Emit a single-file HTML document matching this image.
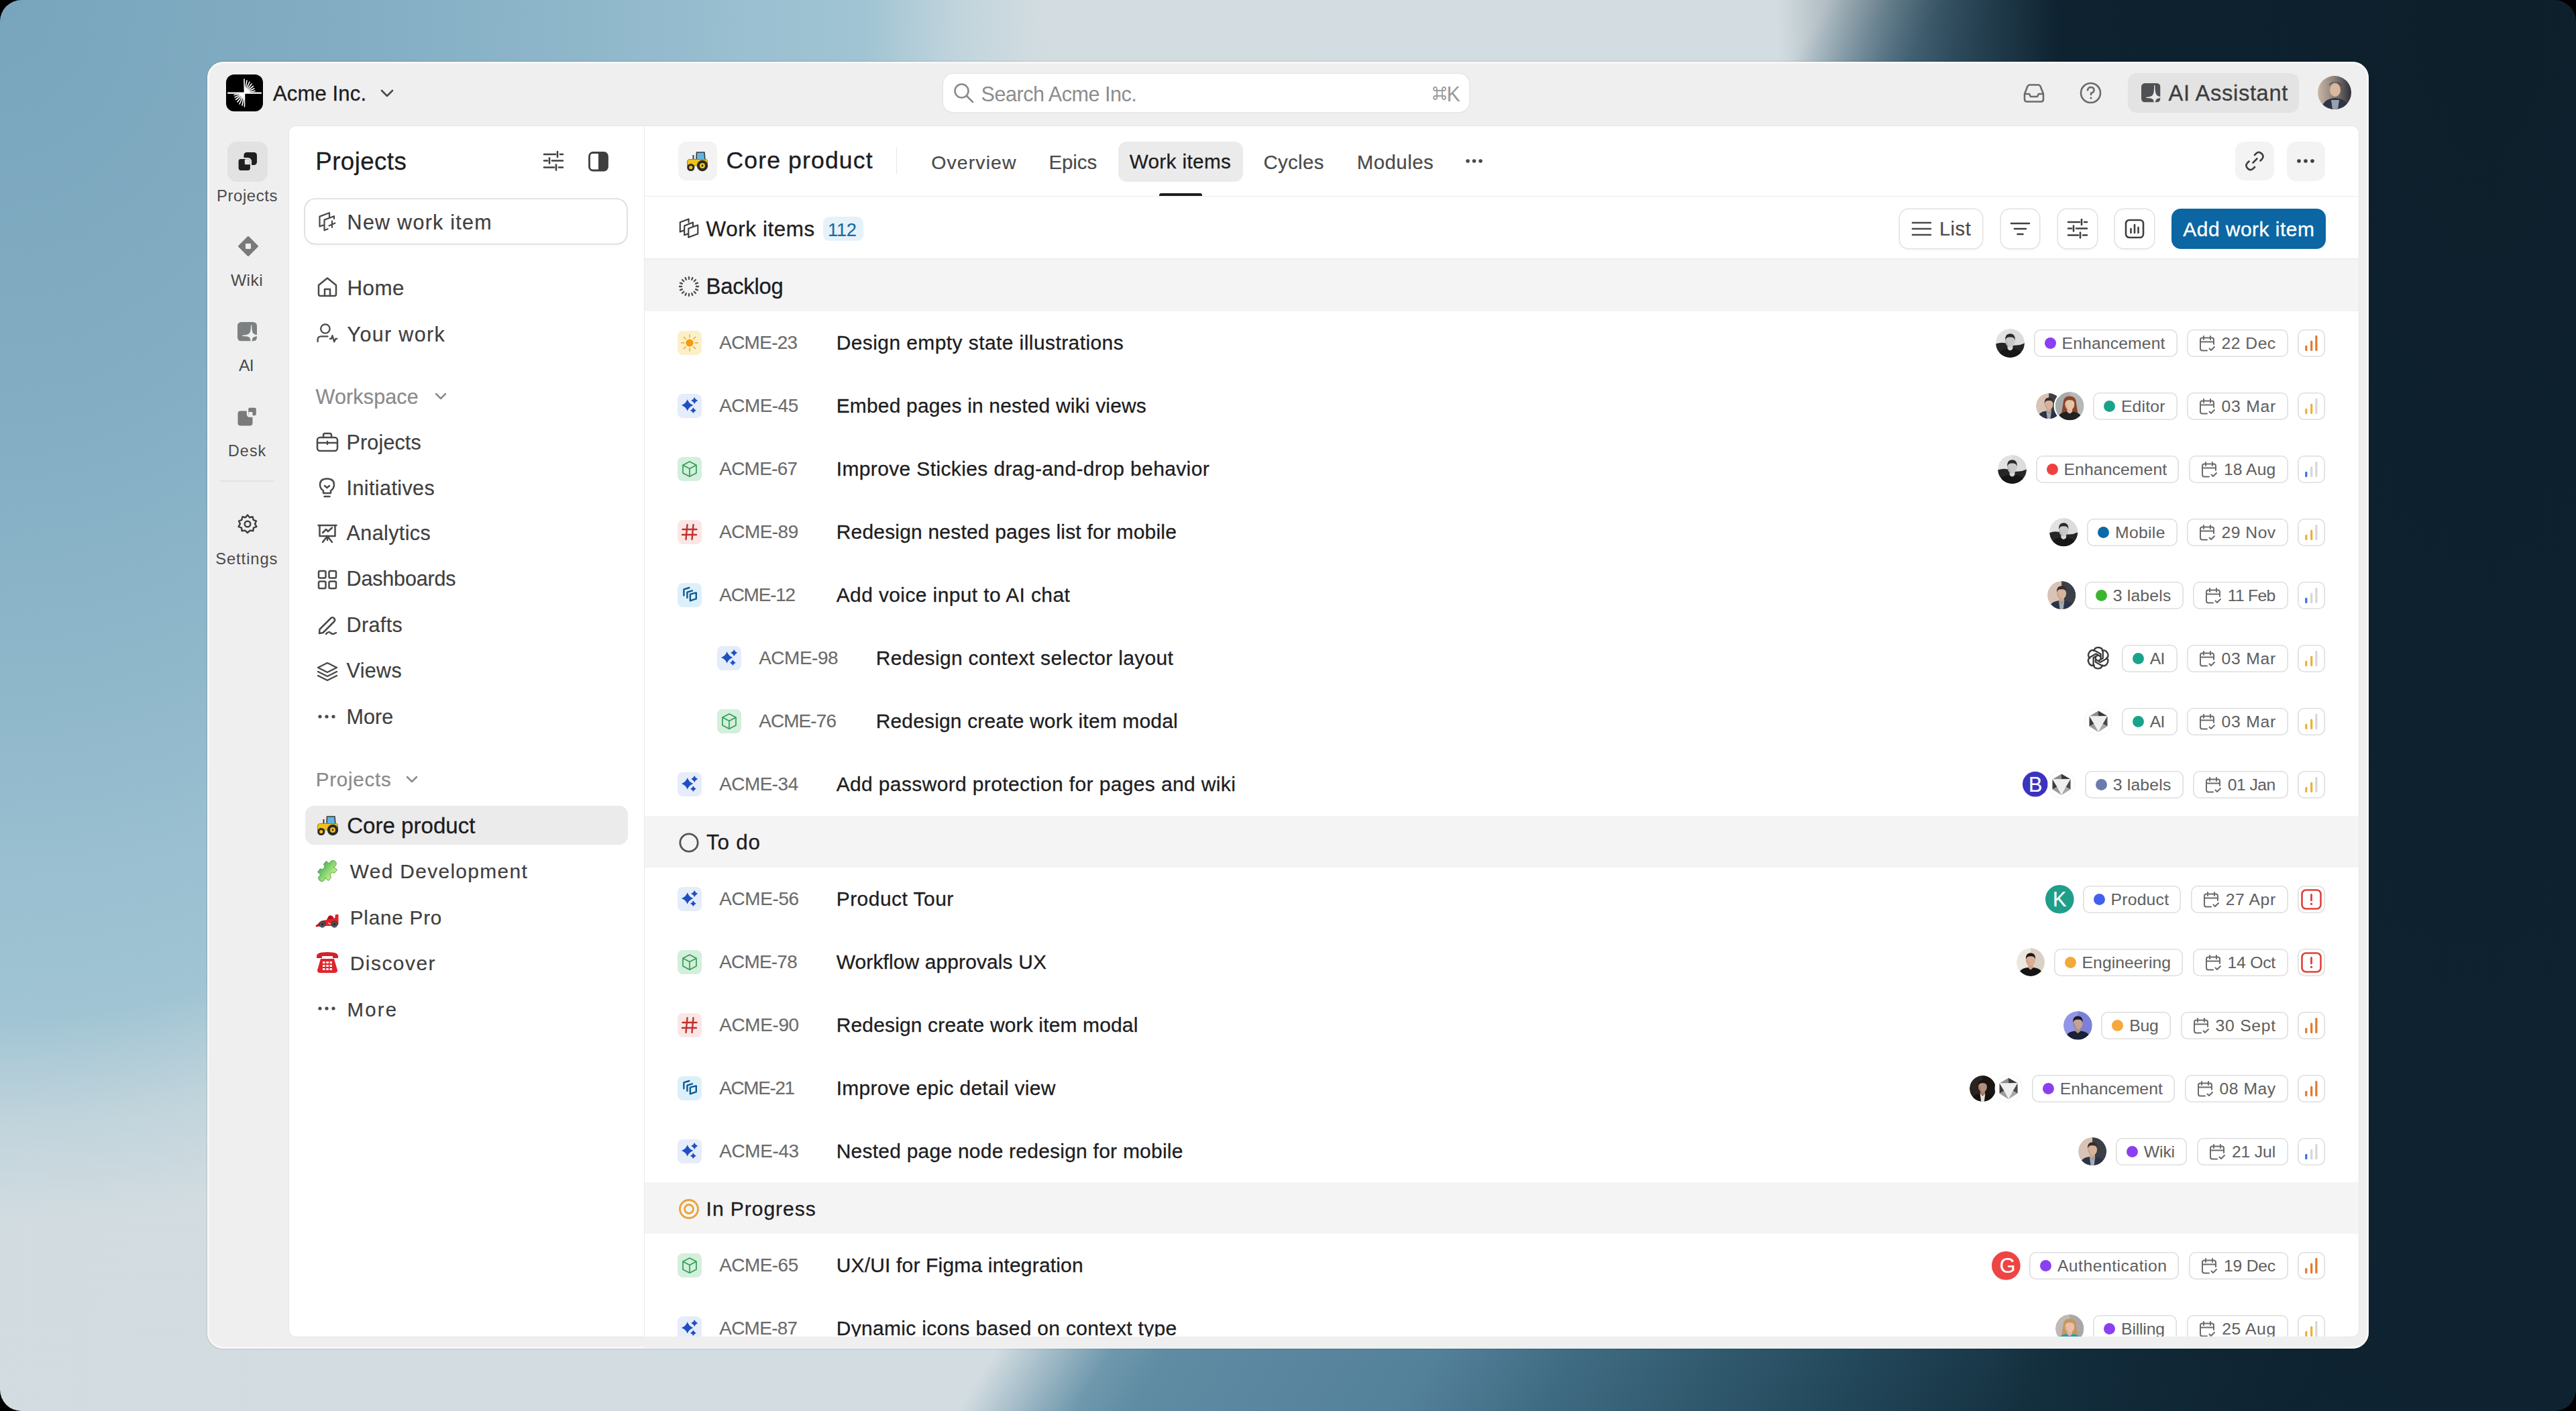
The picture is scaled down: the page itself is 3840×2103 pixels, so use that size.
<!DOCTYPE html>
<html><head><meta charset="utf-8"><title>Work items</title>
<style>
html,body{margin:0;padding:0;width:3840px;height:2103px;overflow:hidden;background:#000;}
body{font-family:"Liberation Sans",sans-serif;position:relative;}
.t{position:absolute;white-space:nowrap;line-height:1;font-family:"Liberation Sans",sans-serif;}
svg{overflow:visible}
</style></head><body>
<div style="position:absolute;left:0;top:0;width:3840px;height:2103px;border-radius:32px;overflow:hidden;
background:
 radial-gradient(ellipse 1050px 2900px at 3700px -50px, #0d1f2b 0%, #0e2230 60%, rgba(14,34,48,0) 100%),
 radial-gradient(ellipse 1500px 1760px at 0px 0px, #79a5bc 0%, #82adc3 35%, #90b8cb 60%, #9ac0d1 75%, #a0c4d3 86%, rgba(185,208,218,0.7) 95%, rgba(210,220,224,0) 104%),
 linear-gradient(121.7deg, #d2dce0 0px, #d3dde1 2320px, #6f98ad 2468px, #5f8ca3 2540px, #54819a 2880px, #3f6b82 3060px, #24495c 3410px, #14303f 3670px, #0f2533 4020px, #0e2230 4400px);"></div>
<div style="position:absolute;left:309.0px;top:92.0px;width:3222.0px;height:1918.0px;background:#efefef;border-radius:24px;box-shadow:inset 0 0 0 2.5px rgba(255,255,255,0.6), 0 0 2px 1px rgba(20,40,50,0.12);"></div><div style="position:absolute;left:431.0px;top:188.0px;width:3085.0px;height:1804.0px;background:#ffffff;border-radius:10px;box-shadow:0 0 0 1px rgba(0,0,0,0.03);"></div><svg style="position:absolute;left:337.0px;top:111.0px;" width="55.0" height="55.0" viewBox="0 0 55 55" fill="none"><rect width="55" height="55" rx="12" fill="#000"/>
<g stroke="#fff" stroke-linecap="round">
<line x1="3" y1="27.7" x2="52" y2="27.7" stroke-width="2.2"/>
<path d="M27 7 L27.5 27.7 M27.5 27.7 L31 9 M27.5 27.7 L35 11 M27.5 27.7 L38 14 M27.5 27.7 L40.5 17.5 M27.5 27.7 L42 21 M27.5 27.7 L43 24.5" stroke-width="1.6"/>
<path d="M27.5 48 L27.5 27.7 M27.5 27.7 L24 46 M27.5 27.7 L20 44 M27.5 27.7 L17 41 M27.5 27.7 L14.5 37.5 M27.5 27.7 L13 34 M27.5 27.7 L12 30.5" stroke-width="1.6"/>
</g></svg><svg style="position:absolute;left:566.0px;top:131.0px;" width="22.0" height="16.0" viewBox="0 0 22 16" fill="none"><path d="M3 4 L11 12 L19 4" stroke="#4a4a4a" stroke-width="2.6" stroke-linecap="round" stroke-linejoin="round"/></svg><div style="position:absolute;left:1406.0px;top:110.0px;width:784.0px;height:57.0px;background:#fff;border-radius:15px;box-shadow:0 0 0 1.5px #e6e6e6;"></div><svg style="position:absolute;left:1421.0px;top:123.0px;" width="32.0" height="32.0" viewBox="0 0 32 32" fill="none"><circle cx="12.5" cy="12.5" r="10" stroke="#8a8a8a" stroke-width="2.6"/><path d="M20 20 L29 29" stroke="#8a8a8a" stroke-width="2.6" stroke-linecap="round"/></svg><svg style="position:absolute;left:2135.0px;top:128.0px;" width="22.0" height="22.0" viewBox="0 0 22 22" fill="none"><path d="M7 7 H15 V15 H7 Z M7 7 V4.5 A2.5 2.5 0 1 0 4.5 7 H7 M15 7 H17.5 A2.5 2.5 0 1 0 15 4.5 V7 M15 15 V17.5 A2.5 2.5 0 1 0 17.5 15 H15 M7 15 H4.5 A2.5 2.5 0 1 0 7 17.5 V15" stroke="#9a9a9a" stroke-width="1.8"/></svg><svg style="position:absolute;left:3014.0px;top:123.0px;" width="36.0" height="32.0" viewBox="0 0 36 32" fill="none"><path d="M4 17 L8.5 5.5 Q9.5 3.5 11.5 3.5 H24.5 Q26.5 3.5 27.5 5.5 L32 17 V25 Q32 28.5 28.5 28.5 H7.5 Q4 28.5 4 25 Z" stroke="#6b6b6b" stroke-width="2.6" stroke-linejoin="round"/><path d="M4 17 H11 L13 21 H23 L25 17 H32" stroke="#6b6b6b" stroke-width="2.6" stroke-linejoin="round"/></svg><svg style="position:absolute;left:3099.0px;top:121.0px;" width="36.0" height="36.0" viewBox="0 0 36 36" fill="none"><circle cx="17.5" cy="17.5" r="14.5" stroke="#6b6b6b" stroke-width="2.6"/><path d="M13 13.5 Q13.5 9 18 9 Q22.5 9.2 22.5 13.5 Q22.5 16.5 18 18 V20" stroke="#6b6b6b" stroke-width="2.6" stroke-linecap="round"/><circle cx="18" cy="25" r="1.6" fill="#6b6b6b"/></svg><div style="position:absolute;left:3172.0px;top:109.0px;width:255.0px;height:59.0px;background:#e3e3e3;border-radius:13px;"></div><svg style="position:absolute;left:3192.0px;top:124.0px;" width="29.0" height="29.0" viewBox="0 0 29 29" fill="none"><defs><clipPath id="aicl1"><rect x="0" y="0" width="28.5" height="28.5" rx="5.5"/></clipPath></defs><g clip-path="url(#aicl1)"><rect x="0" y="0" width="28.5" height="28.5" fill="#4f5254"/><path d="M19.8 3.4 C19.8 17.5 21.3 21.3 34 21.3 C21.3 21.3 19.8 23 19.8 34 C19.8 23 18.3 21.3 7.8 21.3 C18.3 21.3 19.8 17.5 19.8 3.4 Z" fill="#eaeaea" stroke="#eaeaea" stroke-width="1.2" stroke-linejoin="round"/></g></svg><svg style="position:absolute;left:3455.0px;top:113.0px;" width="50.0" height="50.0" viewBox="0 0 50 50" fill="none"><defs><clipPath id="cav"><circle cx="25" cy="25" r="25"/></clipPath>
<linearGradient id="gav" x1="0" y1="0" x2="1" y2="0"><stop offset="0" stop-color="#c9b7a8"/><stop offset="0.5" stop-color="#8a7f78"/><stop offset="1" stop-color="#2d2f36"/></linearGradient></defs>
<g clip-path="url(#cav)"><rect width="50" height="50" fill="url(#gav)"/>
<ellipse cx="26" cy="21" rx="8" ry="10" fill="#d9b7a0"/><path d="M17 15 Q26 4 35 15 L34 12 Q26 6 18 12Z" fill="#3a2f2a"/>
<path d="M5 50 Q8 34 26 33 Q44 34 47 50Z" fill="#2f3447"/><path d="M20 36 L32 36 L30 50 L22 50Z" fill="#9aa0b0"/></g></svg><div style="position:absolute;left:339.0px;top:211.0px;width:59.5px;height:59.5px;background:#e2e2e2;border-radius:14px;"></div><svg style="position:absolute;left:354.0px;top:226.0px;" width="30.0" height="30.0" viewBox="0 0 30 30" fill="none"><rect x="9.5" y="1" width="19.5" height="19" rx="4.5" fill="#1f1f1f"/><rect x="0.5" y="10" width="19.5" height="19" rx="4.5" fill="#1f1f1f" stroke="#e2e2e2" stroke-width="2.2"/><rect x="10.8" y="11.2" width="8" height="8" rx="1.5" fill="#e2e2e2"/></svg><svg style="position:absolute;left:355.0px;top:352.0px;" width="30.0" height="30.0" viewBox="0 0 30 30" fill="none"><path d="M15 1.5 L28.5 15 L15 28.5 L1.5 15 Z" fill="#7a7a7a" stroke="#7a7a7a" stroke-width="3" stroke-linejoin="round"/><rect x="11" y="11" width="8" height="8" rx="1" fill="#efefef"/></svg><svg style="position:absolute;left:354.0px;top:480.0px;" width="30.0" height="29.0" viewBox="0 0 30 29" fill="none"><defs><clipPath id="aicl2"><rect x="0" y="0" width="29" height="28.5" rx="5.5"/></clipPath></defs><g clip-path="url(#aicl2)"><rect x="0" y="0" width="29" height="28.5" fill="#7d8081"/><path d="M20.6 5 C20.6 16.5 22.1 20.3 34 20.3 C22.1 20.3 20.6 22 20.6 34 C20.6 22 19.1 20.3 7.6 20.3 C19.1 20.3 20.6 16.5 20.6 5 Z" fill="#efefef" stroke="#efefef" stroke-width="1.2" stroke-linejoin="round"/></g></svg><svg style="position:absolute;left:354.0px;top:606.0px;" width="30.0" height="30.0" viewBox="0 0 30 30" fill="none"><rect x="0.5" y="6.5" width="22" height="22" rx="4" fill="#7a7a7a"/><rect x="15" y="0.5" width="14" height="14" rx="3" fill="#7a7a7a" stroke="#efefef" stroke-width="2.5"/><rect x="16.5" y="8" width="6" height="6" rx="1" fill="#efefef"/></svg><div style="position:absolute;left:328.0px;top:716.0px;width:80.0px;height:2.0px;background:#e2e2e2;"></div><svg style="position:absolute;left:353.0px;top:765.0px;" width="32.0" height="33.0" viewBox="0 0 32 33" fill="none"><path d="M16 2.5 L19 6.2 L23.6 5.3 L24.6 9.8 L29 11.6 L27 15.8 L29.5 20 L25 21.7 L24.3 26.3 L19.7 25.6 L16 29 L12.3 25.6 L7.7 26.3 L7 21.7 L2.5 20 L5 15.8 L3 11.6 L7.4 9.8 L8.4 5.3 L13 6.2 Z" stroke="#3d3d3d" stroke-width="2.4" stroke-linejoin="round"/><circle cx="16" cy="16" r="4.3" stroke="#3d3d3d" stroke-width="2.4"/></svg><div style="position:absolute;left:959.5px;top:188.0px;width:1.5px;height:1804.0px;background:#ebebeb;"></div><svg style="position:absolute;left:808.0px;top:224.0px;" width="34.0" height="34.0" viewBox="0 0 34 34" fill="none"><g stroke="#3f3f3f" stroke-width="2.6" stroke-linecap="round"><path d="M3 6 H20 M27 6 H31 M3 15.5 H8 M15 15.5 H31 M3 25.5 H18 M25 25.5 H31 M23 2 V10 M11 11.5 V19.5 M21 21.5 V29.5"/></g></svg><svg style="position:absolute;left:877.0px;top:226.0px;" width="31.0" height="30.0" viewBox="0 0 31 30" fill="none"><rect x="1.5" y="1.5" width="27" height="26.5" rx="5.5" stroke="#3f3f3f" stroke-width="2.8"/><path d="M15 1.5 H23 Q28.5 1.5 28.5 7 V22.5 Q28.5 28 23 28 H15Z" fill="#3f3f3f"/></svg><div style="position:absolute;left:455.0px;top:297.0px;width:479.0px;height:66.0px;background:#fff;border-radius:15px;box-shadow:0 0 0 1.6px #dadada, 0 3px 6px rgba(0,0,0,0.04);"></div><svg style="position:absolute;left:465.0px;top:308.0px;" width="46.0" height="46.0" viewBox="0 0 46 46" fill="none"><g stroke="#4a4a4a" stroke-width="2.2" stroke-linejoin="round" stroke-linecap="round"><path d="M17 27.6 L11.5 29.5 V14.6 L26 9.2 V16"/><path d="M23.6 33.2 L18.5 35.3 V19.6 L33 14.2 V18"/><path d="M30 21.6 V31 M25.5 28.4 L34.5 24.6"/></g></svg><svg style="position:absolute;left:472.0px;top:412.0px;" width="32.0" height="32.0" viewBox="0 0 32 32" fill="none"><g stroke="#4a4a4a" stroke-width="2.5" stroke-linejoin="round" stroke-linecap="round"><path d="M3 13 L16 2.5 L29 13 V26.5 Q29 29 26.5 29 H5.5 Q3 29 3 26.5 Z"/><path d="M12 29 V19 H20 V29"/></g></svg><svg style="position:absolute;left:465.0px;top:475.0px;" width="46.0" height="46.0" viewBox="0 0 46 46" fill="none"><g stroke="#4a4a4a" stroke-width="2.3" stroke-linejoin="round" stroke-linecap="round"><circle cx="19.9" cy="15" r="6.7"/><path d="M8.6 34.2 V31.5 Q8.6 26.4 13.8 26.4 H23.5"/><path d="M26.7 29.8 H29 L30.5 25.2 L33.2 34.4 L35.3 29.8 H37.5"/></g></svg><svg style="position:absolute;left:647.0px;top:583.0px;" width="20.0" height="16.0" viewBox="0 0 20 16" fill="none"><path d="M3 4 L10 11 L17 4" stroke="#8a8a8a" stroke-width="2.5" stroke-linecap="round" stroke-linejoin="round"/></svg><svg style="position:absolute;left:471.0px;top:643.0px;" width="34.0" height="32.0" viewBox="0 0 34 32" fill="none"><g stroke="#4a4a4a" stroke-width="2.5" stroke-linejoin="round" stroke-linecap="round"><rect x="2" y="9" width="30" height="20" rx="4"/><path d="M11 9 V5.5 Q11 3 13.5 3 H20.5 Q23 3 23 5.5 V9"/><path d="M2 17 H32"/><path d="M17 15 V19"/></g></svg><svg style="position:absolute;left:472.0px;top:711.0px;" width="32.0" height="32.0" viewBox="0 0 32 32" fill="none"><g stroke="#4a4a4a" stroke-width="2.5" stroke-linejoin="round" stroke-linecap="round"><path d="M10 20.5 Q5 17 5 11.5 Q5 2.5 15.5 2.5 Q26 2.5 26 11.5 Q26 17 21 20.5 V24 H10 Z"/><path d="M11.5 29 H19.5"/><path d="M12 13 L15.5 16 L19 13"/></g></svg><svg style="position:absolute;left:472.0px;top:780.0px;" width="32.0" height="32.0" viewBox="0 0 32 32" fill="none"><g stroke="#4a4a4a" stroke-width="2.5" stroke-linejoin="round" stroke-linecap="round"><path d="M2.5 3 H29.5"/><path d="M4.5 3 V19 H27.5 V3"/><path d="M9 14 L14 9 L17 12 L23 6.5"/><path d="M16 19 L9 28 M16 19 L23 28 M16 19 V25"/></g></svg><svg style="position:absolute;left:472.0px;top:848.0px;" width="32.0" height="32.0" viewBox="0 0 32 32" fill="none"><g stroke="#4a4a4a" stroke-width="2.5" stroke-linejoin="round" stroke-linecap="round"><rect x="3" y="3" width="10.5" height="10.5" rx="2"/><rect x="18.5" y="3" width="10.5" height="10.5" rx="2"/><rect x="3" y="18.5" width="10.5" height="10.5" rx="2"/><rect x="18.5" y="18.5" width="10.5" height="10.5" rx="2"/></g></svg><svg style="position:absolute;left:472.0px;top:917.0px;" width="32.0" height="32.0" viewBox="0 0 32 32" fill="none"><g stroke="#4a4a4a" stroke-width="2.5" stroke-linejoin="round" stroke-linecap="round"><path d="M4 27 L4.5 21 L21 4.5 Q23.5 2 26 4.5 Q28.5 7 26 9.5 L9.5 26 Z"/><path d="M14 28 Q18 23 21 26.5 Q24 29.5 29 26"/></g></svg><svg style="position:absolute;left:471.0px;top:985.0px;" width="34.0" height="32.0" viewBox="0 0 34 32" fill="none"><g stroke="#4a4a4a" stroke-width="2.5" stroke-linejoin="round" stroke-linecap="round"><path d="M17 3 L31 10 L17 17 L3 10 Z"/><path d="M3 16 L17 23 L31 16"/><path d="M3 22 L17 29 L31 22"/></g></svg><svg style="position:absolute;left:473.0px;top:1064.0px;" width="30.0" height="8.0" viewBox="0 0 30 8" fill="none"><circle cx="4" cy="4" r="2.6" fill="#4a4a4a"/><circle cx="14" cy="4" r="2.6" fill="#4a4a4a"/><circle cx="24" cy="4" r="2.6" fill="#4a4a4a"/></svg><svg style="position:absolute;left:473.0px;top:1499.0px;" width="30.0" height="8.0" viewBox="0 0 30 8" fill="none"><circle cx="4" cy="4" r="2.6" fill="#4a4a4a"/><circle cx="14" cy="4" r="2.6" fill="#4a4a4a"/><circle cx="24" cy="4" r="2.6" fill="#4a4a4a"/></svg><svg style="position:absolute;left:604.0px;top:1154.0px;" width="20.0" height="16.0" viewBox="0 0 20 16" fill="none"><path d="M3 4 L10 11 L17 4" stroke="#8a8a8a" stroke-width="2.5" stroke-linecap="round" stroke-linejoin="round"/></svg><div style="position:absolute;left:454.5px;top:1200.5px;width:481.0px;height:58.5px;background:#ebebeb;border-radius:13px;"></div><svg style="position:absolute;left:470.5px;top:1215.0px;" width="35.0" height="31.0" viewBox="0 0 35 31" fill="none"><g>
<path d="M16.5 2 H28 L29 14 H16 Z" fill="#5fb6e6" stroke="#3b3b3b" stroke-width="1.6" stroke-linejoin="round"/>
<rect x="10.5" y="6" width="2" height="8" fill="#3b3b3b"/>
<path d="M2.5 15 Q3 12.5 6 12.5 H30 Q32.5 12.5 32.5 15 V22 H2.5 Z" fill="#f2c21b" stroke="#9b7a06" stroke-width="0.9"/>
<circle cx="25" cy="22" r="8.2" fill="#2a2a2a"/><circle cx="25" cy="22" r="4" fill="#f2c21b"/><circle cx="25" cy="22" r="1.4" fill="#2a2a2a"/>
<circle cx="7.8" cy="24.5" r="5.6" fill="#2a2a2a"/><circle cx="7.8" cy="24.5" r="2.6" fill="#f2c21b"/>
</g></svg><svg style="position:absolute;left:469.0px;top:1279.0px;" width="38.0" height="38.0" viewBox="0 0 38 38" fill="none"><defs><linearGradient id="pzg" x1="0" y1="0" x2="0" y2="1"><stop offset="0" stop-color="#55b865"/><stop offset="0.55" stop-color="#8fd874"/><stop offset="1" stop-color="#c2f07e"/></linearGradient></defs><g transform="translate(19 19) rotate(-52) scale(1.22)"><path d="M-8.5 -8.5 H-3.3 A3.3 3.3 0 0 0 3.3 -8.5 H8.5 V-3 A4 4 0 1 1 8.5 3 V8.5 H3.3 A3.3 3.3 0 0 0 -3.3 8.5 H-8.5 V3 A4 4 0 1 1 -8.5 -3 Z" fill="url(#pzg)" stroke="#4f9a45" stroke-width="0.7" stroke-linejoin="round"/></g></svg><svg style="position:absolute;left:465.0px;top:1350.0px;" width="46.0" height="46.0" viewBox="0 0 46 46" fill="none"><path d="M5.5 29.5 L11 25.5 L12.5 30.5 L6 31.5 Z" fill="#c9151c"/><path d="M9 27 Q14 21.5 22 21 L25 15.5 Q27.5 13.5 30.5 15.5 L34 19 L35 13 H39.5 V27.5 L36 30 H12 Z" fill="#e0242b"/><path d="M22 21 L25 15.5 Q27.5 13.5 30.5 15.5 L31 20 Q26 19 22 21Z" fill="#b3121a"/><path d="M24 25.5 L28 27.5" stroke="#ffb3b3" stroke-width="1.4"/><circle cx="15.5" cy="27.5" r="4.6" fill="#555" stroke="#2e2e2e" stroke-width="1"/><circle cx="15.5" cy="27.5" r="1.4" fill="#1a1a1a"/><circle cx="33.5" cy="27.5" r="4.6" fill="#555" stroke="#2e2e2e" stroke-width="1"/><circle cx="33.5" cy="27.5" r="1.4" fill="#1a1a1a"/></svg><svg style="position:absolute;left:470.0px;top:1416.0px;" width="36.0" height="37.0" viewBox="0 0 36 37" fill="none"><path d="M2 9 Q2 3 18 3 Q34 3 34 9 V12 H26 V9 H10 V12 H2 Z" fill="#d3212a"/><path d="M8 13 L28 13 L33 30 Q33 34 29 34 H7 Q3 34 3 30 Z" fill="#e0242b"/><g fill="#fff"><rect x="11" y="17" width="3.5" height="3" /><rect x="16.3" y="17" width="3.5" height="3"/><rect x="21.5" y="17" width="3.5" height="3"/><rect x="11" y="22" width="3.5" height="3"/><rect x="16.3" y="22" width="3.5" height="3"/><rect x="21.5" y="22" width="3.5" height="3"/><rect x="11" y="27" width="3.5" height="3"/><rect x="16.3" y="27" width="3.5" height="3"/><rect x="21.5" y="27" width="3.5" height="3"/></g></svg><div style="position:absolute;left:1011.0px;top:211.0px;width:58.0px;height:58.0px;background:#f3f3f3;border-radius:12px;"></div><svg style="position:absolute;left:1022.0px;top:225.0px;" width="35.0" height="31.0" viewBox="0 0 35 31" fill="none"><g>
<path d="M16.5 2 H28 L29 14 H16 Z" fill="#5fb6e6" stroke="#3b3b3b" stroke-width="1.6" stroke-linejoin="round"/>
<rect x="10.5" y="6" width="2" height="8" fill="#3b3b3b"/>
<path d="M2.5 15 Q3 12.5 6 12.5 H30 Q32.5 12.5 32.5 15 V22 H2.5 Z" fill="#f2c21b" stroke="#9b7a06" stroke-width="0.9"/>
<circle cx="25" cy="22" r="8.2" fill="#2a2a2a"/><circle cx="25" cy="22" r="4" fill="#f2c21b"/><circle cx="25" cy="22" r="1.4" fill="#2a2a2a"/>
<circle cx="7.8" cy="24.5" r="5.6" fill="#2a2a2a"/><circle cx="7.8" cy="24.5" r="2.6" fill="#f2c21b"/>
</g></svg><div style="position:absolute;left:1335.5px;top:219.0px;width:1.5px;height:41.0px;background:#e6e6e6;"></div><div style="position:absolute;left:1667.0px;top:211.0px;width:186.0px;height:60.0px;background:#ebebeb;border-radius:13px;"></div><div style="position:absolute;left:1728.0px;top:287.5px;width:64.0px;height:5.0px;background:#1d1d1f;border-radius:3px 3px 0 0;"></div><svg style="position:absolute;left:2184.0px;top:235.0px;" width="28.0" height="10.0" viewBox="0 0 28 10" fill="none"><circle cx="4" cy="5" r="2.8" fill="#4a4a4a"/><circle cx="13.5" cy="5" r="2.8" fill="#4a4a4a"/><circle cx="23" cy="5" r="2.8" fill="#4a4a4a"/></svg><div style="position:absolute;left:3332.0px;top:210.5px;width:57.5px;height:58.0px;background:#f3f3f3;border-radius:14px;"></div><svg style="position:absolute;left:3345.0px;top:224.0px;" width="32.0" height="32.0" viewBox="0 0 32 32" fill="none"><g stroke="#3f3f3f" stroke-width="2.6" stroke-linecap="round"><path d="M13.5 18.5 L19.5 12.5"/><path d="M16 7 L18.5 4.5 Q22.5 1 26.5 5 Q30.5 9 27 13 L24.5 15.5"/><path d="M16 25 L13.5 27.5 Q9.5 31 5.5 27 Q1.5 23 5 19 L7.5 16.5"/></g></svg><div style="position:absolute;left:3409.0px;top:210.5px;width:56.5px;height:59.0px;background:#f3f3f3;border-radius:14px;"></div><svg style="position:absolute;left:3423.0px;top:235.0px;" width="28.0" height="10.0" viewBox="0 0 28 10" fill="none"><circle cx="4" cy="5" r="2.8" fill="#3f3f3f"/><circle cx="14" cy="5" r="2.8" fill="#3f3f3f"/><circle cx="24" cy="5" r="2.8" fill="#3f3f3f"/></svg><div style="position:absolute;left:961.0px;top:291.5px;width:2555.0px;height:1.5px;background:#ebebeb;"></div><svg style="position:absolute;left:1005.0px;top:318.0px;" width="46.0" height="46.0" viewBox="0 0 46 46" fill="none"><g stroke="#3c3c3c" stroke-width="2.1" stroke-linejoin="round" stroke-linecap="round"><path d="M14.8 25.3 L8.8 27.6 V13.3 L21.6 8.4 V13.6"/><path d="M21 30.3 L15.2 32.5 V18.5 L28 13.5 V18.6"/><path d="M21.3 22.6 L35.3 17.5 V30.5 L21.3 35.8 Z"/></g></svg><div style="position:absolute;left:1226.6px;top:322.7px;width:60.4px;height:36.8px;background:#e6f2fa;border-radius:9px;"></div><div style="position:absolute;left:2832.0px;top:312.0px;width:123.0px;height:58.0px;background:#fff;border-radius:13px;box-shadow:0 0 0 1.5px #e2e2e2, 0 2px 4px rgba(0,0,0,0.05);"></div><svg style="position:absolute;left:2849.0px;top:329.0px;" width="32.0" height="24.0" viewBox="0 0 32 24" fill="none"><g stroke="#4a4a4a" stroke-width="2.6" stroke-linecap="round"><path d="M2 3 H29 M2 12 H29 M2 21 H29"/></g></svg><div style="position:absolute;left:2983.0px;top:312.0px;width:57.0px;height:58.0px;background:#fff;border-radius:13px;box-shadow:0 0 0 1.5px #e2e2e2, 0 2px 4px rgba(0,0,0,0.05);"></div><svg style="position:absolute;left:2996.0px;top:329.0px;" width="32.0" height="24.0" viewBox="0 0 32 24" fill="none"><g stroke="#3f3f3f" stroke-width="2.6" stroke-linecap="round"><path d="M2 4 H29 M7 12 H24 M11.5 20 H19.5"/></g></svg><div style="position:absolute;left:3068.0px;top:312.0px;width:58.0px;height:58.0px;background:#fff;border-radius:13px;box-shadow:0 0 0 1.5px #e2e2e2, 0 2px 4px rgba(0,0,0,0.05);"></div><svg style="position:absolute;left:3081.0px;top:325.0px;" width="32.0" height="32.0" viewBox="0 0 32 32" fill="none"><g stroke="#3f3f3f" stroke-width="2.6" stroke-linecap="round"><path d="M2 6 H19 M26 6 H30 M2 15.5 H7 M14 15.5 H30 M2 25.5 H17 M24 25.5 H30 M22 2 V10 M10 11.5 V19.5 M20 21.5 V29.5"/></g></svg><div style="position:absolute;left:3153.0px;top:312.0px;width:58.0px;height:58.0px;background:#fff;border-radius:13px;box-shadow:0 0 0 1.5px #e2e2e2, 0 2px 4px rgba(0,0,0,0.05);"></div><svg style="position:absolute;left:3167.0px;top:326.0px;" width="30.0" height="30.0" viewBox="0 0 30 30" fill="none"><g stroke="#3f3f3f" stroke-width="2.6" stroke-linecap="round"><rect x="2" y="2" width="26" height="26" rx="5"/><path d="M9.5 21 V15 M15 21 V9 M20.5 21 V13"/></g></svg><div style="position:absolute;left:3237.4px;top:311.0px;width:230.0px;height:60.0px;background:#0b66a3;border-radius:14px;"></div><div style="position:absolute;left:961.0px;top:385.0px;width:2555.0px;height:1.5px;background:#ececec;"></div><div style="position:absolute;left:961.0px;top:386.5px;width:2555.0px;height:77.5px;background:#f4f4f4;"></div><div style="position:absolute;left:961.0px;top:1216.0px;width:2555.0px;height:77.0px;background:#f4f4f4;"></div><div style="position:absolute;left:961.0px;top:1762.0px;width:2555.0px;height:77.0px;background:#f4f4f4;"></div><svg style="position:absolute;left:1011.0px;top:411.3px;" width="32.0" height="32.0" viewBox="0 0 32 32" fill="none"><g stroke="#4d4d4d" stroke-width="2.3" stroke-linecap="round"><line x1="16.00" y1="26.90" x2="16.00" y2="30.10"/><line x1="11.83" y1="26.07" x2="10.60" y2="29.03"/><line x1="8.29" y1="23.71" x2="6.03" y2="25.97"/><line x1="5.93" y1="20.17" x2="2.97" y2="21.40"/><line x1="5.10" y1="16.00" x2="1.90" y2="16.00"/><line x1="5.93" y1="11.83" x2="2.97" y2="10.60"/><line x1="8.29" y1="8.29" x2="6.03" y2="6.03"/><line x1="11.83" y1="5.93" x2="10.60" y2="2.97"/><line x1="16.00" y1="5.10" x2="16.00" y2="1.90"/><line x1="20.17" y1="5.93" x2="21.40" y2="2.97"/><line x1="23.71" y1="8.29" x2="25.97" y2="6.03"/><line x1="26.07" y1="11.83" x2="29.03" y2="10.60"/><line x1="26.90" y1="16.00" x2="30.10" y2="16.00"/><line x1="26.07" y1="20.17" x2="29.03" y2="21.40"/><line x1="23.71" y1="23.71" x2="25.97" y2="25.97"/><line x1="20.17" y1="26.07" x2="21.40" y2="29.03"/></g></svg><svg style="position:absolute;left:1011.0px;top:1240.0px;" width="32.0" height="32.0" viewBox="0 0 32 32" fill="none"><circle cx="16" cy="16" r="13.2" stroke="#555" stroke-width="2.8"/></svg><svg style="position:absolute;left:1011.0px;top:1786.0px;" width="32.0" height="32.0" viewBox="0 0 32 32" fill="none"><circle cx="16" cy="16" r="13.5" stroke="#e9a23b" stroke-width="2.8"/><circle cx="16" cy="16" r="6.5" stroke="#e9a23b" stroke-width="2.8"/></svg><div style="position:absolute;left:1010.0px;top:493.0px;width:36.0px;height:36.0px;background:#fcf0c9;border-radius:8px;"></div><svg style="position:absolute;left:1010.0px;top:493.0px;" width="36.0" height="36.0" viewBox="0 0 36 36" fill="none"><circle cx="18" cy="18" r="5.6" fill="#f59a0a"/><g stroke="#f2b640" stroke-width="1.8" stroke-linecap="round"><line x1="26.50" y1="18.00" x2="30.00" y2="18.00"/><line x1="24.01" y1="24.01" x2="26.49" y2="26.49"/><line x1="18.00" y1="26.50" x2="18.00" y2="30.00"/><line x1="11.99" y1="24.01" x2="9.51" y2="26.49"/><line x1="9.50" y1="18.00" x2="6.00" y2="18.00"/><line x1="11.99" y1="11.99" x2="9.51" y2="9.51"/><line x1="18.00" y1="9.50" x2="18.00" y2="6.00"/><line x1="24.01" y1="11.99" x2="26.49" y2="9.51"/></g></svg><svg style="position:absolute;left:2975.0px;top:489.5px;" width="43.0" height="43.0" viewBox="0 0 43 43" fill="none"><defs><clipPath id="ac1"><circle cx="21.5" cy="21.5" r="21.5"/></clipPath></defs><g clip-path="url(#ac1)"><rect width="43" height="43" fill="#e2e2e2"/><rect x="21.5" width="21.5" height="43" fill="#dcdcdc"/><path d="M0 22.575 Q10.75 18.275 21.5 23.650000000000002 Q32.25 26.875 43 21.5 V43 H0Z" fill="#262626"/><rect x="17.63" y="23.650000000000002" width="7.739999999999999" height="8.6" fill="#d8d8d8"/><ellipse cx="21.5" cy="18.49" rx="7.095000000000001" ry="9.03" fill="#c9c9c9"/><path d="M14.405000000000001 18.49 Q15.049999999999999 25.8 21.5 27.52 Q17.2 23.650000000000002 16.125 17.2Z" fill="#9a9a9a" opacity="0.45"/><path d="M14.190000000000001 17.63 Q13.33 7.739999999999999 21.5 7.3100000000000005 Q29.669999999999998 7.739999999999999 28.810000000000002 17.63 Q27.95 12.040000000000001 21.5 12.469999999999999 Q15.479999999999999 12.040000000000001 14.190000000000001 17.63Z" fill="#2b2b2b"/><path d="M1.72 43 Q4.3 30.529999999999998 17.2 29.669999999999998 L21.5 33.325 L25.8 29.669999999999998 Q38.7 30.529999999999998 41.28 43Z" fill="#161616"/></g><circle cx="21.5" cy="21.5" r="22.7" stroke="#ffffff" stroke-width="2.4"/></svg><div style="position:absolute;left:3031.6px;top:490.5px;width:214.2px;height:41.5px;background:#fff;border-radius:10px;box-shadow:inset 0 0 0 1.6px #dedede;"></div><svg style="position:absolute;left:3047.6px;top:502.5px;" width="17.0" height="17.0" viewBox="0 0 17 17" fill="none"><circle cx="8.5" cy="8.5" r="8.5" fill="#8b3ff0"/></svg><div style="position:absolute;left:3259.7px;top:490.5px;width:150.9px;height:41.5px;background:#fff;border-radius:10px;box-shadow:inset 0 0 0 1.6px #dedede;"></div><svg style="position:absolute;left:3277.7px;top:498.5px;" width="25.0" height="26.0" viewBox="0 0 25 26" fill="none"><g stroke="#6b6b6b" stroke-width="2" stroke-linecap="round" stroke-linejoin="round"><path d="M12 23.5 H5 Q2 23.5 2 20.5 V7.5 Q2 4.5 5 4.5 H19 Q22 4.5 22 7.5 V14"/><path d="M2 10.5 H22 M7 2 V7 M17 2 V7"/><path d="M15.5 20.5 L18 23 L23 18"/></g></svg><div style="position:absolute;left:3425.2px;top:490.5px;width:41.3px;height:41.5px;background:#fff;border-radius:10px;box-shadow:inset 0 0 0 1.6px #dedede;"></div><svg style="position:absolute;left:3425.2px;top:498.5px;" width="41.3" height="30.0" viewBox="0 0 41.3 30" fill="none"><line x1="12.8" y1="17.3" x2="12.8" y2="22.6" stroke="#e07a2e" stroke-width="3.2" stroke-linecap="round"/><line x1="20.7" y1="10.2" x2="20.7" y2="22.6" stroke="#e07a2e" stroke-width="3.2" stroke-linecap="round"/><line x1="27.9" y1="2.4" x2="27.9" y2="22.6" stroke="#e07a2e" stroke-width="3.2" stroke-linecap="round"/></svg><div style="position:absolute;left:1010.0px;top:587.0px;width:36.0px;height:36.0px;background:#e5ecfa;border-radius:8px;"></div><svg style="position:absolute;left:1010.0px;top:587.0px;" width="36.0" height="36.0" viewBox="0 0 36 36" fill="none"><path d="M14.7 8.2 Q17.0 14.599999999999998 23.4 16.9 Q17.0 19.2 14.7 25.599999999999998 Q12.399999999999999 19.2 6.0 16.9 Q12.399999999999999 14.599999999999998 14.7 8.2Z" fill="#1e4fc4"/><path d="M25.2 4.9 Q26.5 8.6 30.2 9.9 Q26.5 11.200000000000001 25.2 14.9 Q23.9 11.200000000000001 20.2 9.9 Q23.9 8.6 25.2 4.9Z" fill="#1e4fc4"/><path d="M23.4 20.299999999999997 Q24.549999999999997 23.55 27.799999999999997 24.7 Q24.549999999999997 25.849999999999998 23.4 29.1 Q22.25 25.849999999999998 19.0 24.7 Q22.25 23.55 23.4 20.299999999999997Z" fill="#1e4fc4"/></svg><svg style="position:absolute;left:3034.6px;top:585.8px;" width="38.4" height="38.4" viewBox="0 0 38.40000000000009 38.40000000000009" fill="none"><defs><clipPath id="ac2"><circle cx="19.200000000000045" cy="19.200000000000045" r="19.200000000000045"/></clipPath></defs><g clip-path="url(#ac2)"><rect width="38.40000000000009" height="38.40000000000009" fill="#d9c3b6"/><rect x="19.200000000000045" width="19.200000000000045" height="38.40000000000009" fill="#3b3f47"/><rect x="15.744000000000037" y="21.12000000000005" width="6.912000000000016" height="7.680000000000018" fill="#c9a58f"/><ellipse cx="19.200000000000045" cy="16.51200000000004" rx="6.336000000000015" ry="8.06400000000002" fill="#d8b39c"/><path d="M12.864000000000031 16.51200000000004 Q13.440000000000031 23.040000000000052 19.200000000000045 24.576000000000057 Q15.360000000000037 21.12000000000005 14.400000000000034 15.360000000000037Z" fill="#b58d78" opacity="0.45"/><path d="M12.67200000000003 15.744000000000037 Q11.904000000000028 6.912000000000016 19.200000000000045 6.528000000000016 Q26.49600000000006 6.912000000000016 25.728000000000062 15.744000000000037 Q24.96000000000006 10.752000000000027 19.200000000000045 11.136000000000026 Q13.824000000000032 10.752000000000027 12.67200000000003 15.744000000000037Z" fill="#3a2d27"/><path d="M1.5360000000000036 38.40000000000009 Q3.840000000000009 27.264000000000063 15.360000000000037 26.49600000000006 L19.200000000000045 29.760000000000073 L23.040000000000052 26.49600000000006 Q34.56000000000008 27.264000000000063 36.86400000000008 38.40000000000009Z" fill="#2d3347"/><path d="M15.360000000000037 26.49600000000006 L19.200000000000045 29.760000000000073 L23.040000000000052 26.49600000000006 L21.504000000000055 38.40000000000009 H16.89600000000004Z" fill="#a3abb5"/></g><circle cx="19.200000000000045" cy="19.200000000000045" r="20.400000000000045" stroke="#ffffff" stroke-width="2.4"/></svg><svg style="position:absolute;left:3064.0px;top:583.7px;" width="42.6" height="42.6" viewBox="0 0 42.59999999999991 42.59999999999991" fill="none"><defs><clipPath id="ac3"><circle cx="21.299999999999955" cy="21.299999999999955" r="21.299999999999955"/></clipPath></defs><g clip-path="url(#ac3)"><rect width="42.59999999999991" height="42.59999999999991" fill="#a7abad"/><rect x="21.299999999999955" width="21.299999999999955" height="42.59999999999991" fill="#b6b9ba"/><path d="M11.714999999999977 15.974999999999966 Q11.714999999999977 6.389999999999986 21.299999999999955 6.389999999999986 Q30.884999999999934 6.389999999999986 30.884999999999934 15.974999999999966 L34.07999999999993 36.20999999999992 L8.519999999999982 36.20999999999992 Z" fill="#8a4526"/><rect x="17.465999999999962" y="23.429999999999954" width="7.667999999999983" height="8.519999999999982" fill="#dfb89f"/><ellipse cx="21.299999999999955" cy="18.317999999999962" rx="7.028999999999986" ry="8.94599999999998" fill="#e8c4ab"/><path d="M14.27099999999997 18.317999999999962 Q14.909999999999966 25.559999999999945 21.299999999999955 27.263999999999943 Q17.039999999999964 23.429999999999954 15.974999999999966 17.039999999999964Z" fill="#c99f86" opacity="0.45"/><path d="M14.057999999999971 17.465999999999962 Q13.205999999999971 7.667999999999983 21.299999999999955 7.241999999999985 Q29.393999999999934 7.667999999999983 28.54199999999994 17.465999999999962 Q27.68999999999994 11.927999999999976 21.299999999999955 12.353999999999973 Q15.335999999999967 11.927999999999976 14.057999999999971 17.465999999999962Z" fill="#8a4526"/><path d="M1.7039999999999964 42.59999999999991 Q4.259999999999991 30.245999999999935 17.039999999999964 29.393999999999934 L21.299999999999955 33.01499999999993 L25.559999999999945 29.393999999999934 Q38.33999999999992 30.245999999999935 40.89599999999991 42.59999999999991Z" fill="#222222"/></g><circle cx="21.299999999999955" cy="21.299999999999955" r="22.499999999999954" stroke="#ffffff" stroke-width="2.4"/></svg><div style="position:absolute;left:3120.0px;top:584.5px;width:125.8px;height:41.5px;background:#fff;border-radius:10px;box-shadow:inset 0 0 0 1.6px #dedede;"></div><svg style="position:absolute;left:3136.0px;top:596.5px;" width="17.0" height="17.0" viewBox="0 0 17 17" fill="none"><circle cx="8.5" cy="8.5" r="8.5" fill="#1aa38b"/></svg><div style="position:absolute;left:3259.7px;top:584.5px;width:150.9px;height:41.5px;background:#fff;border-radius:10px;box-shadow:inset 0 0 0 1.6px #dedede;"></div><svg style="position:absolute;left:3277.7px;top:592.5px;" width="25.0" height="26.0" viewBox="0 0 25 26" fill="none"><g stroke="#6b6b6b" stroke-width="2" stroke-linecap="round" stroke-linejoin="round"><path d="M12 23.5 H5 Q2 23.5 2 20.5 V7.5 Q2 4.5 5 4.5 H19 Q22 4.5 22 7.5 V14"/><path d="M2 10.5 H22 M7 2 V7 M17 2 V7"/><path d="M15.5 20.5 L18 23 L23 18"/></g></svg><div style="position:absolute;left:3425.2px;top:584.5px;width:41.3px;height:41.5px;background:#fff;border-radius:10px;box-shadow:inset 0 0 0 1.6px #dedede;"></div><svg style="position:absolute;left:3425.2px;top:592.5px;" width="41.3" height="30.0" viewBox="0 0 41.3 30" fill="none"><line x1="12.8" y1="17.3" x2="12.8" y2="22.6" stroke="#e9b233" stroke-width="3.2" stroke-linecap="round"/><line x1="20.7" y1="10.2" x2="20.7" y2="22.6" stroke="#e9b233" stroke-width="3.2" stroke-linecap="round"/><line x1="27.9" y1="2.4" x2="27.9" y2="22.6" stroke="#d6d6d6" stroke-width="3.2" stroke-linecap="round"/></svg><div style="position:absolute;left:1010.0px;top:681.0px;width:36.0px;height:36.0px;background:#d4efdb;border-radius:8px;"></div><svg style="position:absolute;left:1010.0px;top:681.0px;" width="36.0" height="36.0" viewBox="0 0 36 36" fill="none"><g stroke="#2f9e57" stroke-width="1.7" stroke-linejoin="round"><path d="M18 7 L28 12.3 V23.9 L18 29.2 L8 23.9 V12.3 Z"/><path d="M8 12.3 L18 17.6 L28 12.3 M18 17.6 V29.2"/></g></svg><svg style="position:absolute;left:2978.0px;top:677.5px;" width="43.0" height="43.0" viewBox="0 0 43 43" fill="none"><defs><clipPath id="ac4"><circle cx="21.5" cy="21.5" r="21.5"/></clipPath></defs><g clip-path="url(#ac4)"><rect width="43" height="43" fill="#e2e2e2"/><rect x="21.5" width="21.5" height="43" fill="#dcdcdc"/><path d="M0 22.575 Q10.75 18.275 21.5 23.650000000000002 Q32.25 26.875 43 21.5 V43 H0Z" fill="#262626"/><rect x="17.63" y="23.650000000000002" width="7.739999999999999" height="8.6" fill="#d8d8d8"/><ellipse cx="21.5" cy="18.49" rx="7.095000000000001" ry="9.03" fill="#c9c9c9"/><path d="M14.405000000000001 18.49 Q15.049999999999999 25.8 21.5 27.52 Q17.2 23.650000000000002 16.125 17.2Z" fill="#9a9a9a" opacity="0.45"/><path d="M14.190000000000001 17.63 Q13.33 7.739999999999999 21.5 7.3100000000000005 Q29.669999999999998 7.739999999999999 28.810000000000002 17.63 Q27.95 12.040000000000001 21.5 12.469999999999999 Q15.479999999999999 12.040000000000001 14.190000000000001 17.63Z" fill="#2b2b2b"/><path d="M1.72 43 Q4.3 30.529999999999998 17.2 29.669999999999998 L21.5 33.325 L25.8 29.669999999999998 Q38.7 30.529999999999998 41.28 43Z" fill="#161616"/></g><circle cx="21.5" cy="21.5" r="22.7" stroke="#ffffff" stroke-width="2.4"/></svg><div style="position:absolute;left:3034.6px;top:678.5px;width:213.9px;height:41.5px;background:#fff;border-radius:10px;box-shadow:inset 0 0 0 1.6px #dedede;"></div><svg style="position:absolute;left:3050.6px;top:690.5px;" width="17.0" height="17.0" viewBox="0 0 17 17" fill="none"><circle cx="8.5" cy="8.5" r="8.5" fill="#ef4040"/></svg><div style="position:absolute;left:3263.0px;top:678.5px;width:147.6px;height:41.5px;background:#fff;border-radius:10px;box-shadow:inset 0 0 0 1.6px #dedede;"></div><svg style="position:absolute;left:3281.0px;top:686.5px;" width="25.0" height="26.0" viewBox="0 0 25 26" fill="none"><g stroke="#6b6b6b" stroke-width="2" stroke-linecap="round" stroke-linejoin="round"><path d="M12 23.5 H5 Q2 23.5 2 20.5 V7.5 Q2 4.5 5 4.5 H19 Q22 4.5 22 7.5 V14"/><path d="M2 10.5 H22 M7 2 V7 M17 2 V7"/><path d="M15.5 20.5 L18 23 L23 18"/></g></svg><div style="position:absolute;left:3425.2px;top:678.5px;width:41.3px;height:41.5px;background:#fff;border-radius:10px;box-shadow:inset 0 0 0 1.6px #dedede;"></div><svg style="position:absolute;left:3425.2px;top:686.5px;" width="41.3" height="30.0" viewBox="0 0 41.3 30" fill="none"><line x1="12.8" y1="17.3" x2="12.8" y2="22.6" stroke="#3c70e0" stroke-width="3.2" stroke-linecap="round"/><line x1="20.7" y1="10.2" x2="20.7" y2="22.6" stroke="#d6d6d6" stroke-width="3.2" stroke-linecap="round"/><line x1="27.9" y1="2.4" x2="27.9" y2="22.6" stroke="#d6d6d6" stroke-width="3.2" stroke-linecap="round"/></svg><div style="position:absolute;left:1010.0px;top:775.0px;width:36.0px;height:36.0px;background:#fbe6e6;border-radius:8px;"></div><svg style="position:absolute;left:1010.0px;top:775.0px;" width="36.0" height="36.0" viewBox="0 0 36 36" fill="none"><g stroke="#c0302a" stroke-width="2.4" stroke-linecap="round"><path d="M14.5 7 L12.5 29 M23.5 7 L21.5 29 M7.5 14 H28.5 M7 22 H28"/></g></svg><svg style="position:absolute;left:3054.8px;top:771.8px;" width="42.4" height="42.4" viewBox="0 0 42.399999999999636 42.399999999999636" fill="none"><defs><clipPath id="ac5"><circle cx="21.199999999999818" cy="21.199999999999818" r="21.199999999999818"/></clipPath></defs><g clip-path="url(#ac5)"><rect width="42.399999999999636" height="42.399999999999636" fill="#e2e2e2"/><rect x="21.199999999999818" width="21.199999999999818" height="42.399999999999636" fill="#dcdcdc"/><path d="M0 22.25999999999981 Q10.599999999999909 18.019999999999843 21.199999999999818 23.3199999999998 Q31.799999999999727 26.499999999999773 42.399999999999636 21.199999999999818 V42.399999999999636 H0Z" fill="#262626"/><rect x="17.38399999999985" y="23.3199999999998" width="7.631999999999934" height="8.479999999999928" fill="#d8d8d8"/><ellipse cx="21.199999999999818" cy="18.231999999999843" rx="6.99599999999994" ry="8.903999999999924" fill="#c9c9c9"/><path d="M14.20399999999988 18.231999999999843 Q14.839999999999872 25.43999999999978 21.199999999999818 27.13599999999977 Q16.959999999999855 23.3199999999998 15.899999999999864 16.959999999999855Z" fill="#9a9a9a" opacity="0.45"/><path d="M13.99199999999988 17.38399999999985 Q13.143999999999886 7.631999999999934 21.199999999999818 7.207999999999939 Q29.255999999999748 7.631999999999934 28.40799999999976 17.38399999999985 Q27.559999999999764 11.871999999999899 21.199999999999818 12.295999999999893 Q15.263999999999868 11.871999999999899 13.99199999999988 17.38399999999985Z" fill="#2b2b2b"/><path d="M1.6959999999999855 42.399999999999636 Q4.239999999999964 30.10399999999974 16.959999999999855 29.255999999999748 L21.199999999999818 32.85999999999972 L25.43999999999978 29.255999999999748 Q38.15999999999968 30.10399999999974 40.70399999999965 42.399999999999636Z" fill="#161616"/></g><circle cx="21.199999999999818" cy="21.199999999999818" r="22.399999999999817" stroke="#ffffff" stroke-width="2.4"/></svg><div style="position:absolute;left:3111.1px;top:772.5px;width:134.7px;height:41.5px;background:#fff;border-radius:10px;box-shadow:inset 0 0 0 1.6px #dedede;"></div><svg style="position:absolute;left:3127.1px;top:784.5px;" width="17.0" height="17.0" viewBox="0 0 17 17" fill="none"><circle cx="8.5" cy="8.5" r="8.5" fill="#0b69a8"/></svg><div style="position:absolute;left:3259.7px;top:772.5px;width:150.9px;height:41.5px;background:#fff;border-radius:10px;box-shadow:inset 0 0 0 1.6px #dedede;"></div><svg style="position:absolute;left:3277.7px;top:780.5px;" width="25.0" height="26.0" viewBox="0 0 25 26" fill="none"><g stroke="#6b6b6b" stroke-width="2" stroke-linecap="round" stroke-linejoin="round"><path d="M12 23.5 H5 Q2 23.5 2 20.5 V7.5 Q2 4.5 5 4.5 H19 Q22 4.5 22 7.5 V14"/><path d="M2 10.5 H22 M7 2 V7 M17 2 V7"/><path d="M15.5 20.5 L18 23 L23 18"/></g></svg><div style="position:absolute;left:3425.2px;top:772.5px;width:41.3px;height:41.5px;background:#fff;border-radius:10px;box-shadow:inset 0 0 0 1.6px #dedede;"></div><svg style="position:absolute;left:3425.2px;top:780.5px;" width="41.3" height="30.0" viewBox="0 0 41.3 30" fill="none"><line x1="12.8" y1="17.3" x2="12.8" y2="22.6" stroke="#e9b233" stroke-width="3.2" stroke-linecap="round"/><line x1="20.7" y1="10.2" x2="20.7" y2="22.6" stroke="#e9b233" stroke-width="3.2" stroke-linecap="round"/><line x1="27.9" y1="2.4" x2="27.9" y2="22.6" stroke="#d6d6d6" stroke-width="3.2" stroke-linecap="round"/></svg><div style="position:absolute;left:1010.0px;top:869.0px;width:36.0px;height:36.0px;background:#dcf0fa;border-radius:8px;"></div><svg style="position:absolute;left:1010.0px;top:869.0px;" width="36.0" height="36.0" viewBox="0 0 36 36" fill="none"><g stroke="#0c5a90" stroke-width="2.4" stroke-linejoin="round" stroke-linecap="round"><path d="M9.4 18.5 V9.4 L17.4 7"/><path d="M14.4 21.9 V13.6 L21.9 11.3"/><path d="M18.9 16.7 L27.8 14.4 V23.4 L18.9 26.4 Z"/></g></svg><svg style="position:absolute;left:3051.9px;top:865.9px;" width="42.3" height="42.3" viewBox="0 0 42.29999999999973 42.29999999999973" fill="none"><defs><clipPath id="ac6"><circle cx="21.149999999999864" cy="21.149999999999864" r="21.149999999999864"/></clipPath></defs><g clip-path="url(#ac6)"><rect width="42.29999999999973" height="42.29999999999973" fill="#d9c3b6"/><rect x="21.149999999999864" width="21.149999999999864" height="42.29999999999973" fill="#3b3f47"/><rect x="17.342999999999886" y="23.26499999999985" width="7.613999999999951" height="8.459999999999946" fill="#c9a58f"/><ellipse cx="21.149999999999864" cy="18.188999999999883" rx="6.979499999999955" ry="8.882999999999942" fill="#d8b39c"/><path d="M14.17049999999991 18.188999999999883 Q14.804999999999904 25.379999999999836 21.149999999999864 27.071999999999825 Q16.91999999999989 23.26499999999985 15.862499999999898 16.91999999999989Z" fill="#b58d78" opacity="0.45"/><path d="M13.95899999999991 17.342999999999886 Q13.112999999999916 7.613999999999951 21.149999999999864 7.1909999999999545 Q29.18699999999981 7.613999999999951 28.34099999999982 17.342999999999886 Q27.494999999999823 11.843999999999925 21.149999999999864 12.26699999999992 Q15.227999999999902 11.843999999999925 13.95899999999991 17.342999999999886Z" fill="#3a2d27"/><path d="M1.691999999999989 42.29999999999973 Q4.229999999999973 30.032999999999806 16.91999999999989 29.18699999999981 L21.149999999999864 32.78249999999979 L25.379999999999836 29.18699999999981 Q38.06999999999976 30.032999999999806 40.607999999999734 42.29999999999973Z" fill="#2d3347"/><path d="M16.91999999999989 29.18699999999981 L21.149999999999864 32.78249999999979 L25.379999999999836 29.18699999999981 L23.68799999999985 42.29999999999973 H18.61199999999988Z" fill="#a3abb5"/></g><circle cx="21.149999999999864" cy="21.149999999999864" r="22.349999999999863" stroke="#ffffff" stroke-width="2.4"/></svg><div style="position:absolute;left:3107.8px;top:866.5px;width:146.8px;height:41.5px;background:#fff;border-radius:10px;box-shadow:inset 0 0 0 1.6px #dedede;"></div><svg style="position:absolute;left:3123.8px;top:878.5px;" width="17.0" height="17.0" viewBox="0 0 17 17" fill="none"><circle cx="8.5" cy="8.5" r="8.5" fill="#3bb52f"/></svg><div style="position:absolute;left:3268.8px;top:866.5px;width:141.8px;height:41.5px;background:#fff;border-radius:10px;box-shadow:inset 0 0 0 1.6px #dedede;"></div><svg style="position:absolute;left:3286.8px;top:874.5px;" width="25.0" height="26.0" viewBox="0 0 25 26" fill="none"><g stroke="#6b6b6b" stroke-width="2" stroke-linecap="round" stroke-linejoin="round"><path d="M12 23.5 H5 Q2 23.5 2 20.5 V7.5 Q2 4.5 5 4.5 H19 Q22 4.5 22 7.5 V14"/><path d="M2 10.5 H22 M7 2 V7 M17 2 V7"/><path d="M15.5 20.5 L18 23 L23 18"/></g></svg><div style="position:absolute;left:3425.2px;top:866.5px;width:41.3px;height:41.5px;background:#fff;border-radius:10px;box-shadow:inset 0 0 0 1.6px #dedede;"></div><svg style="position:absolute;left:3425.2px;top:874.5px;" width="41.3" height="30.0" viewBox="0 0 41.3 30" fill="none"><line x1="12.8" y1="17.3" x2="12.8" y2="22.6" stroke="#3c70e0" stroke-width="3.2" stroke-linecap="round"/><line x1="20.7" y1="10.2" x2="20.7" y2="22.6" stroke="#d6d6d6" stroke-width="3.2" stroke-linecap="round"/><line x1="27.9" y1="2.4" x2="27.9" y2="22.6" stroke="#d6d6d6" stroke-width="3.2" stroke-linecap="round"/></svg><div style="position:absolute;left:1069.0px;top:963.0px;width:36.0px;height:36.0px;background:#e5ecfa;border-radius:8px;"></div><svg style="position:absolute;left:1069.0px;top:963.0px;" width="36.0" height="36.0" viewBox="0 0 36 36" fill="none"><path d="M14.7 8.2 Q17.0 14.599999999999998 23.4 16.9 Q17.0 19.2 14.7 25.599999999999998 Q12.399999999999999 19.2 6.0 16.9 Q12.399999999999999 14.599999999999998 14.7 8.2Z" fill="#1e4fc4"/><path d="M25.2 4.9 Q26.5 8.6 30.2 9.9 Q26.5 11.200000000000001 25.2 14.9 Q23.9 11.200000000000001 20.2 9.9 Q23.9 8.6 25.2 4.9Z" fill="#1e4fc4"/><path d="M23.4 20.299999999999997 Q24.549999999999997 23.55 27.799999999999997 24.7 Q24.549999999999997 25.849999999999998 23.4 29.1 Q22.25 25.849999999999998 19.0 24.7 Q22.25 23.55 23.4 20.299999999999997Z" fill="#1e4fc4"/></svg><svg style="position:absolute;left:3109.3px;top:962.3px;" width="37.4" height="37.4" viewBox="0 0 38 38" fill="none"><g transform="rotate(0 19 19)"><path d="M12.5 8.2 Q13.5 3 19 3 Q25 3 26.2 8.6 L26.2 19.3 L19.2 23.3" stroke="#3a3a3a" stroke-width="2.4" fill="none" stroke-linejoin="round" stroke-linecap="round"/></g><g transform="rotate(60 19 19)"><path d="M12.5 8.2 Q13.5 3 19 3 Q25 3 26.2 8.6 L26.2 19.3 L19.2 23.3" stroke="#3a3a3a" stroke-width="2.4" fill="none" stroke-linejoin="round" stroke-linecap="round"/></g><g transform="rotate(120 19 19)"><path d="M12.5 8.2 Q13.5 3 19 3 Q25 3 26.2 8.6 L26.2 19.3 L19.2 23.3" stroke="#3a3a3a" stroke-width="2.4" fill="none" stroke-linejoin="round" stroke-linecap="round"/></g><g transform="rotate(180 19 19)"><path d="M12.5 8.2 Q13.5 3 19 3 Q25 3 26.2 8.6 L26.2 19.3 L19.2 23.3" stroke="#3a3a3a" stroke-width="2.4" fill="none" stroke-linejoin="round" stroke-linecap="round"/></g><g transform="rotate(240 19 19)"><path d="M12.5 8.2 Q13.5 3 19 3 Q25 3 26.2 8.6 L26.2 19.3 L19.2 23.3" stroke="#3a3a3a" stroke-width="2.4" fill="none" stroke-linejoin="round" stroke-linecap="round"/></g><g transform="rotate(300 19 19)"><path d="M12.5 8.2 Q13.5 3 19 3 Q25 3 26.2 8.6 L26.2 19.3 L19.2 23.3" stroke="#3a3a3a" stroke-width="2.4" fill="none" stroke-linejoin="round" stroke-linecap="round"/></g></svg><div style="position:absolute;left:3162.9px;top:960.5px;width:82.9px;height:41.5px;background:#fff;border-radius:10px;box-shadow:inset 0 0 0 1.6px #dedede;"></div><svg style="position:absolute;left:3178.9px;top:972.5px;" width="17.0" height="17.0" viewBox="0 0 17 17" fill="none"><circle cx="8.5" cy="8.5" r="8.5" fill="#1aa38b"/></svg><div style="position:absolute;left:3259.7px;top:960.5px;width:150.9px;height:41.5px;background:#fff;border-radius:10px;box-shadow:inset 0 0 0 1.6px #dedede;"></div><svg style="position:absolute;left:3277.7px;top:968.5px;" width="25.0" height="26.0" viewBox="0 0 25 26" fill="none"><g stroke="#6b6b6b" stroke-width="2" stroke-linecap="round" stroke-linejoin="round"><path d="M12 23.5 H5 Q2 23.5 2 20.5 V7.5 Q2 4.5 5 4.5 H19 Q22 4.5 22 7.5 V14"/><path d="M2 10.5 H22 M7 2 V7 M17 2 V7"/><path d="M15.5 20.5 L18 23 L23 18"/></g></svg><div style="position:absolute;left:3425.2px;top:960.5px;width:41.3px;height:41.5px;background:#fff;border-radius:10px;box-shadow:inset 0 0 0 1.6px #dedede;"></div><svg style="position:absolute;left:3425.2px;top:968.5px;" width="41.3" height="30.0" viewBox="0 0 41.3 30" fill="none"><line x1="12.8" y1="17.3" x2="12.8" y2="22.6" stroke="#e9b233" stroke-width="3.2" stroke-linecap="round"/><line x1="20.7" y1="10.2" x2="20.7" y2="22.6" stroke="#e9b233" stroke-width="3.2" stroke-linecap="round"/><line x1="27.9" y1="2.4" x2="27.9" y2="22.6" stroke="#d6d6d6" stroke-width="3.2" stroke-linecap="round"/></svg><div style="position:absolute;left:1069.0px;top:1057.0px;width:36.0px;height:36.0px;background:#d4efdb;border-radius:8px;"></div><svg style="position:absolute;left:1069.0px;top:1057.0px;" width="36.0" height="36.0" viewBox="0 0 36 36" fill="none"><g stroke="#2f9e57" stroke-width="1.7" stroke-linejoin="round"><path d="M18 7 L28 12.3 V23.9 L18 29.2 L8 23.9 V12.3 Z"/><path d="M8 12.3 L18 17.6 L28 12.3 M18 17.6 V29.2"/></g></svg><svg style="position:absolute;left:3107.0px;top:1054.0px;" width="42.0" height="42.0" viewBox="0 0 42 42" fill="none"><circle cx="21" cy="21" r="20" fill="#fff" stroke="#f3f3f3" stroke-width="1"/>
<g transform="translate(4 4)">
<path d="M17 1.5 L30.5 9.2 L17 9.6 Z" fill="#383838"/><path d="M17 1.5 L3.5 9.5 L17 9.6Z" fill="#8d8d8d"/>
<path d="M3.5 9.5 L30.5 9.2 L17 33 Z" fill="#efefef"/><path d="M3.5 9.5 L17 33 L10 20Z" fill="#f7f7f7"/>
<path d="M3.5 9.5 V24.5 L10.5 21 Z" fill="#3c3c3c"/><path d="M3.5 24.5 L17 33 L10.5 21Z" fill="#9a9a9a"/>
<path d="M30.5 9.2 V24.5 L23.5 21 Z" fill="#4a4a4a"/><path d="M30.5 24.5 L17 33 L23.5 21Z" fill="#a8a8a8"/>
</g></svg><div style="position:absolute;left:3162.9px;top:1054.5px;width:82.9px;height:41.5px;background:#fff;border-radius:10px;box-shadow:inset 0 0 0 1.6px #dedede;"></div><svg style="position:absolute;left:3178.9px;top:1066.5px;" width="17.0" height="17.0" viewBox="0 0 17 17" fill="none"><circle cx="8.5" cy="8.5" r="8.5" fill="#1aa38b"/></svg><div style="position:absolute;left:3259.7px;top:1054.5px;width:150.9px;height:41.5px;background:#fff;border-radius:10px;box-shadow:inset 0 0 0 1.6px #dedede;"></div><svg style="position:absolute;left:3277.7px;top:1062.5px;" width="25.0" height="26.0" viewBox="0 0 25 26" fill="none"><g stroke="#6b6b6b" stroke-width="2" stroke-linecap="round" stroke-linejoin="round"><path d="M12 23.5 H5 Q2 23.5 2 20.5 V7.5 Q2 4.5 5 4.5 H19 Q22 4.5 22 7.5 V14"/><path d="M2 10.5 H22 M7 2 V7 M17 2 V7"/><path d="M15.5 20.5 L18 23 L23 18"/></g></svg><div style="position:absolute;left:3425.2px;top:1054.5px;width:41.3px;height:41.5px;background:#fff;border-radius:10px;box-shadow:inset 0 0 0 1.6px #dedede;"></div><svg style="position:absolute;left:3425.2px;top:1062.5px;" width="41.3" height="30.0" viewBox="0 0 41.3 30" fill="none"><line x1="12.8" y1="17.3" x2="12.8" y2="22.6" stroke="#e9b233" stroke-width="3.2" stroke-linecap="round"/><line x1="20.7" y1="10.2" x2="20.7" y2="22.6" stroke="#e9b233" stroke-width="3.2" stroke-linecap="round"/><line x1="27.9" y1="2.4" x2="27.9" y2="22.6" stroke="#d6d6d6" stroke-width="3.2" stroke-linecap="round"/></svg><div style="position:absolute;left:1010.0px;top:1151.0px;width:36.0px;height:36.0px;background:#e5ecfa;border-radius:8px;"></div><svg style="position:absolute;left:1010.0px;top:1151.0px;" width="36.0" height="36.0" viewBox="0 0 36 36" fill="none"><path d="M14.7 8.2 Q17.0 14.599999999999998 23.4 16.9 Q17.0 19.2 14.7 25.599999999999998 Q12.399999999999999 19.2 6.0 16.9 Q12.399999999999999 14.599999999999998 14.7 8.2Z" fill="#1e4fc4"/><path d="M25.2 4.9 Q26.5 8.6 30.2 9.9 Q26.5 11.200000000000001 25.2 14.9 Q23.9 11.200000000000001 20.2 9.9 Q23.9 8.6 25.2 4.9Z" fill="#1e4fc4"/><path d="M23.4 20.299999999999997 Q24.549999999999997 23.55 27.799999999999997 24.7 Q24.549999999999997 25.849999999999998 23.4 29.1 Q22.25 25.849999999999998 19.0 24.7 Q22.25 23.55 23.4 20.299999999999997Z" fill="#1e4fc4"/></svg><svg style="position:absolute;left:3015.0px;top:1150.2px;" width="37.6" height="37.6" viewBox="0 0 37.59999999999991 37.59999999999991" fill="none"><circle cx="18.799999999999955" cy="18.799999999999955" r="19.999999999999954" fill="#3b33c0" stroke="#fff" stroke-width="2.4"/></svg><svg style="position:absolute;left:3052.0px;top:1148.0px;" width="42.0" height="42.0" viewBox="0 0 42 42" fill="none"><circle cx="21" cy="21" r="20" fill="#fff" stroke="#f3f3f3" stroke-width="1"/>
<g transform="translate(4 4)">
<path d="M17 1.5 L30.5 9.2 L17 9.6 Z" fill="#383838"/><path d="M17 1.5 L3.5 9.5 L17 9.6Z" fill="#8d8d8d"/>
<path d="M3.5 9.5 L30.5 9.2 L17 33 Z" fill="#efefef"/><path d="M3.5 9.5 L17 33 L10 20Z" fill="#f7f7f7"/>
<path d="M3.5 9.5 V24.5 L10.5 21 Z" fill="#3c3c3c"/><path d="M3.5 24.5 L17 33 L10.5 21Z" fill="#9a9a9a"/>
<path d="M30.5 9.2 V24.5 L23.5 21 Z" fill="#4a4a4a"/><path d="M30.5 24.5 L17 33 L23.5 21Z" fill="#a8a8a8"/>
</g></svg><div style="position:absolute;left:3107.8px;top:1148.5px;width:146.8px;height:41.5px;background:#fff;border-radius:10px;box-shadow:inset 0 0 0 1.6px #dedede;"></div><svg style="position:absolute;left:3123.8px;top:1160.5px;" width="17.0" height="17.0" viewBox="0 0 17 17" fill="none"><circle cx="8.5" cy="8.5" r="8.5" fill="#6b7bb0"/></svg><div style="position:absolute;left:3268.8px;top:1148.5px;width:141.8px;height:41.5px;background:#fff;border-radius:10px;box-shadow:inset 0 0 0 1.6px #dedede;"></div><svg style="position:absolute;left:3286.8px;top:1156.5px;" width="25.0" height="26.0" viewBox="0 0 25 26" fill="none"><g stroke="#6b6b6b" stroke-width="2" stroke-linecap="round" stroke-linejoin="round"><path d="M12 23.5 H5 Q2 23.5 2 20.5 V7.5 Q2 4.5 5 4.5 H19 Q22 4.5 22 7.5 V14"/><path d="M2 10.5 H22 M7 2 V7 M17 2 V7"/><path d="M15.5 20.5 L18 23 L23 18"/></g></svg><div style="position:absolute;left:3425.2px;top:1148.5px;width:41.3px;height:41.5px;background:#fff;border-radius:10px;box-shadow:inset 0 0 0 1.6px #dedede;"></div><svg style="position:absolute;left:3425.2px;top:1156.5px;" width="41.3" height="30.0" viewBox="0 0 41.3 30" fill="none"><line x1="12.8" y1="17.3" x2="12.8" y2="22.6" stroke="#e9b233" stroke-width="3.2" stroke-linecap="round"/><line x1="20.7" y1="10.2" x2="20.7" y2="22.6" stroke="#e9b233" stroke-width="3.2" stroke-linecap="round"/><line x1="27.9" y1="2.4" x2="27.9" y2="22.6" stroke="#d6d6d6" stroke-width="3.2" stroke-linecap="round"/></svg><div style="position:absolute;left:1010.0px;top:1322.0px;width:36.0px;height:36.0px;background:#e5ecfa;border-radius:8px;"></div><svg style="position:absolute;left:1010.0px;top:1322.0px;" width="36.0" height="36.0" viewBox="0 0 36 36" fill="none"><path d="M14.7 8.2 Q17.0 14.599999999999998 23.4 16.9 Q17.0 19.2 14.7 25.599999999999998 Q12.399999999999999 19.2 6.0 16.9 Q12.399999999999999 14.599999999999998 14.7 8.2Z" fill="#1e4fc4"/><path d="M25.2 4.9 Q26.5 8.6 30.2 9.9 Q26.5 11.200000000000001 25.2 14.9 Q23.9 11.200000000000001 20.2 9.9 Q23.9 8.6 25.2 4.9Z" fill="#1e4fc4"/><path d="M23.4 20.299999999999997 Q24.549999999999997 23.55 27.799999999999997 24.7 Q24.549999999999997 25.849999999999998 23.4 29.1 Q22.25 25.849999999999998 19.0 24.7 Q22.25 23.55 23.4 20.299999999999997Z" fill="#1e4fc4"/></svg><svg style="position:absolute;left:3048.7px;top:1318.7px;" width="42.6" height="42.6" viewBox="0 0 42.600000000000364 42.600000000000364" fill="none"><circle cx="21.300000000000182" cy="21.300000000000182" r="22.50000000000018" fill="#1f9e89" stroke="#fff" stroke-width="2.4"/></svg><div style="position:absolute;left:3104.6px;top:1319.5px;width:146.8px;height:41.5px;background:#fff;border-radius:10px;box-shadow:inset 0 0 0 1.6px #dedede;"></div><svg style="position:absolute;left:3120.6px;top:1331.5px;" width="17.0" height="17.0" viewBox="0 0 17 17" fill="none"><circle cx="8.5" cy="8.5" r="8.5" fill="#4361ee"/></svg><div style="position:absolute;left:3265.8px;top:1319.5px;width:144.8px;height:41.5px;background:#fff;border-radius:10px;box-shadow:inset 0 0 0 1.6px #dedede;"></div><svg style="position:absolute;left:3283.8px;top:1327.5px;" width="25.0" height="26.0" viewBox="0 0 25 26" fill="none"><g stroke="#6b6b6b" stroke-width="2" stroke-linecap="round" stroke-linejoin="round"><path d="M12 23.5 H5 Q2 23.5 2 20.5 V7.5 Q2 4.5 5 4.5 H19 Q22 4.5 22 7.5 V14"/><path d="M2 10.5 H22 M7 2 V7 M17 2 V7"/><path d="M15.5 20.5 L18 23 L23 18"/></g></svg><div style="position:absolute;left:3425.2px;top:1319.5px;width:41.3px;height:41.5px;background:#fff;border-radius:10px;box-shadow:inset 0 0 0 1.6px #dedede;"></div><svg style="position:absolute;left:3430.2px;top:1324.5px;" width="31.0" height="31.0" viewBox="0 0 31 31" fill="none"><rect x="1.5" y="1.5" width="28" height="28" rx="6" stroke="#e0403a" stroke-width="2.6"/><path d="M15.5 8.5 V17" stroke="#e0403a" stroke-width="2.8" stroke-linecap="round"/><circle cx="15.5" cy="22.3" r="1.7" fill="#e0403a"/></svg><div style="position:absolute;left:1010.0px;top:1416.0px;width:36.0px;height:36.0px;background:#d4efdb;border-radius:8px;"></div><svg style="position:absolute;left:1010.0px;top:1416.0px;" width="36.0" height="36.0" viewBox="0 0 36 36" fill="none"><g stroke="#2f9e57" stroke-width="1.7" stroke-linejoin="round"><path d="M18 7 L28 12.3 V23.9 L18 29.2 L8 23.9 V12.3 Z"/><path d="M8 12.3 L18 17.6 L28 12.3 M18 17.6 V29.2"/></g></svg><svg style="position:absolute;left:3006.0px;top:1413.0px;" width="42.0" height="42.0" viewBox="0 0 42 42" fill="none"><defs><clipPath id="ac12"><circle cx="21.0" cy="21.0" r="21.0"/></clipPath></defs><g clip-path="url(#ac12)"><rect width="42" height="42" fill="#ece7df"/><rect x="21.0" width="21.0" height="42" fill="#d9d1c5"/><rect x="17.22" y="23.1" width="7.56" height="8.4" fill="#cfa388"/><ellipse cx="21.0" cy="18.06" rx="6.930000000000001" ry="8.82" fill="#d9ae93"/><path d="M14.07 18.06 Q14.7 25.2 21.0 26.88 Q16.8 23.1 15.75 16.8Z" fill="#b78a70" opacity="0.45"/><path d="M13.860000000000001 17.22 Q13.02 7.56 21.0 7.140000000000001 Q28.979999999999997 7.56 28.14 17.22 Q27.3 11.760000000000002 21.0 12.18 Q15.12 11.760000000000002 13.860000000000001 17.22Z" fill="#1d1917"/><path d="M1.68 42 Q4.2 29.82 16.8 28.979999999999997 L21.0 32.550000000000004 L25.2 28.979999999999997 Q37.800000000000004 29.82 40.32 42Z" fill="#141414"/></g><circle cx="21.0" cy="21.0" r="22.2" stroke="#ffffff" stroke-width="2.4"/></svg><div style="position:absolute;left:3061.7px;top:1413.5px;width:192.6px;height:41.5px;background:#fff;border-radius:10px;box-shadow:inset 0 0 0 1.6px #dedede;"></div><svg style="position:absolute;left:3077.7px;top:1425.5px;" width="17.0" height="17.0" viewBox="0 0 17 17" fill="none"><circle cx="8.5" cy="8.5" r="8.5" fill="#f6a83a"/></svg><div style="position:absolute;left:3268.7px;top:1413.5px;width:141.9px;height:41.5px;background:#fff;border-radius:10px;box-shadow:inset 0 0 0 1.6px #dedede;"></div><svg style="position:absolute;left:3286.7px;top:1421.5px;" width="25.0" height="26.0" viewBox="0 0 25 26" fill="none"><g stroke="#6b6b6b" stroke-width="2" stroke-linecap="round" stroke-linejoin="round"><path d="M12 23.5 H5 Q2 23.5 2 20.5 V7.5 Q2 4.5 5 4.5 H19 Q22 4.5 22 7.5 V14"/><path d="M2 10.5 H22 M7 2 V7 M17 2 V7"/><path d="M15.5 20.5 L18 23 L23 18"/></g></svg><div style="position:absolute;left:3425.2px;top:1413.5px;width:41.3px;height:41.5px;background:#fff;border-radius:10px;box-shadow:inset 0 0 0 1.6px #dedede;"></div><svg style="position:absolute;left:3430.2px;top:1418.5px;" width="31.0" height="31.0" viewBox="0 0 31 31" fill="none"><rect x="1.5" y="1.5" width="28" height="28" rx="6" stroke="#e0403a" stroke-width="2.6"/><path d="M15.5 8.5 V17" stroke="#e0403a" stroke-width="2.8" stroke-linecap="round"/><circle cx="15.5" cy="22.3" r="1.7" fill="#e0403a"/></svg><div style="position:absolute;left:1010.0px;top:1510.0px;width:36.0px;height:36.0px;background:#fbe6e6;border-radius:8px;"></div><svg style="position:absolute;left:1010.0px;top:1510.0px;" width="36.0" height="36.0" viewBox="0 0 36 36" fill="none"><g stroke="#c0302a" stroke-width="2.4" stroke-linecap="round"><path d="M14.5 7 L12.5 29 M23.5 7 L21.5 29 M7.5 14 H28.5 M7 22 H28"/></g></svg><svg style="position:absolute;left:3076.2px;top:1506.6px;" width="42.8" height="42.8" viewBox="0 0 42.80000000000018 42.80000000000018" fill="none"><defs><clipPath id="ac13"><circle cx="21.40000000000009" cy="21.40000000000009" r="21.40000000000009"/></clipPath></defs><g clip-path="url(#ac13)"><rect width="42.80000000000018" height="42.80000000000018" fill="#9396e6"/><rect x="21.40000000000009" width="21.40000000000009" height="42.80000000000018" fill="#7c80d6"/><rect x="17.548000000000073" y="23.540000000000102" width="7.704000000000033" height="8.560000000000036" fill="#b08f7d"/><ellipse cx="21.40000000000009" cy="18.404000000000078" rx="7.0620000000000305" ry="8.988000000000039" fill="#c7a38f"/><path d="M14.338000000000061 18.404000000000078 Q14.980000000000063 25.68000000000011 21.40000000000009 27.392000000000117 Q17.120000000000072 23.540000000000102 16.050000000000068 17.120000000000072Z" fill="#4a63c9" opacity="0.45"/><path d="M14.124000000000061 17.548000000000073 Q13.268000000000056 7.704000000000033 21.40000000000009 7.276000000000032 Q29.532000000000124 7.704000000000033 28.676000000000123 17.548000000000073 Q27.820000000000118 11.984000000000052 21.40000000000009 12.412000000000052 Q15.408000000000065 11.984000000000052 14.124000000000061 17.548000000000073Z" fill="#1a1a26"/><path d="M1.7120000000000073 42.80000000000018 Q4.280000000000018 30.388000000000126 17.120000000000072 29.532000000000124 L21.40000000000009 33.170000000000144 L25.68000000000011 29.532000000000124 Q38.52000000000017 30.388000000000126 41.08800000000017 42.80000000000018Z" fill="#1a2035"/></g><circle cx="21.40000000000009" cy="21.40000000000009" r="22.60000000000009" stroke="#ffffff" stroke-width="2.4"/></svg><div style="position:absolute;left:3132.3px;top:1507.5px;width:103.9px;height:41.5px;background:#fff;border-radius:10px;box-shadow:inset 0 0 0 1.6px #dedede;"></div><svg style="position:absolute;left:3148.3px;top:1519.5px;" width="17.0" height="17.0" viewBox="0 0 17 17" fill="none"><circle cx="8.5" cy="8.5" r="8.5" fill="#f6a83a"/></svg><div style="position:absolute;left:3250.7px;top:1507.5px;width:159.9px;height:41.5px;background:#fff;border-radius:10px;box-shadow:inset 0 0 0 1.6px #dedede;"></div><svg style="position:absolute;left:3268.7px;top:1515.5px;" width="25.0" height="26.0" viewBox="0 0 25 26" fill="none"><g stroke="#6b6b6b" stroke-width="2" stroke-linecap="round" stroke-linejoin="round"><path d="M12 23.5 H5 Q2 23.5 2 20.5 V7.5 Q2 4.5 5 4.5 H19 Q22 4.5 22 7.5 V14"/><path d="M2 10.5 H22 M7 2 V7 M17 2 V7"/><path d="M15.5 20.5 L18 23 L23 18"/></g></svg><div style="position:absolute;left:3425.2px;top:1507.5px;width:41.3px;height:41.5px;background:#fff;border-radius:10px;box-shadow:inset 0 0 0 1.6px #dedede;"></div><svg style="position:absolute;left:3425.2px;top:1515.5px;" width="41.3" height="30.0" viewBox="0 0 41.3 30" fill="none"><line x1="12.8" y1="17.3" x2="12.8" y2="22.6" stroke="#e07a2e" stroke-width="3.2" stroke-linecap="round"/><line x1="20.7" y1="10.2" x2="20.7" y2="22.6" stroke="#e07a2e" stroke-width="3.2" stroke-linecap="round"/><line x1="27.9" y1="2.4" x2="27.9" y2="22.6" stroke="#e07a2e" stroke-width="3.2" stroke-linecap="round"/></svg><div style="position:absolute;left:1010.0px;top:1604.0px;width:36.0px;height:36.0px;background:#dcf0fa;border-radius:8px;"></div><svg style="position:absolute;left:1010.0px;top:1604.0px;" width="36.0" height="36.0" viewBox="0 0 36 36" fill="none"><g stroke="#0c5a90" stroke-width="2.4" stroke-linejoin="round" stroke-linecap="round"><path d="M9.4 18.5 V9.4 L17.4 7"/><path d="M14.4 21.9 V13.6 L21.9 11.3"/><path d="M18.9 16.7 L27.8 14.4 V23.4 L18.9 26.4 Z"/></g></svg><svg style="position:absolute;left:2935.6px;top:1602.5px;" width="39.0" height="39.0" viewBox="0 0 39.0 39.0" fill="none"><defs><clipPath id="ac14"><circle cx="19.5" cy="19.5" r="19.5"/></clipPath></defs><g clip-path="url(#ac14)"><rect width="39.0" height="39.0" fill="#2a2320"/><rect x="19.5" width="19.5" height="39.0" fill="#1b1614"/><rect x="15.989999999999998" y="21.450000000000003" width="7.02" height="7.800000000000001" fill="#a4826f"/><ellipse cx="19.5" cy="16.77" rx="6.4350000000000005" ry="8.19" fill="#b3907c"/><path d="M13.065000000000001 16.77 Q13.649999999999999 23.4 19.5 24.96 Q15.600000000000001 21.450000000000003 14.625 15.600000000000001Z" fill="#7d5f50" opacity="0.45"/><path d="M12.870000000000001 15.989999999999998 Q12.09 7.02 19.5 6.630000000000001 Q26.909999999999997 7.02 26.130000000000003 15.989999999999998 Q25.35 10.920000000000002 19.5 11.309999999999999 Q14.04 10.920000000000002 12.870000000000001 15.989999999999998Z" fill="#1a1412"/><path d="M1.56 39.0 Q3.9000000000000004 27.689999999999998 15.600000000000001 26.909999999999997 L19.5 30.225 L23.4 26.909999999999997 Q35.1 27.689999999999998 37.44 39.0Z" fill="#161212"/><path d="M15.600000000000001 26.909999999999997 L19.5 30.225 L23.4 26.909999999999997 L21.840000000000003 39.0 H17.16Z" fill="#e6e0dc"/></g><circle cx="19.5" cy="19.5" r="20.7" stroke="#ffffff" stroke-width="2.4"/></svg><svg style="position:absolute;left:2972.5px;top:1600.9px;" width="42.2" height="42.2" viewBox="0 0 42 42" fill="none"><circle cx="21" cy="21" r="20" fill="#fff" stroke="#f3f3f3" stroke-width="1"/>
<g transform="translate(4 4)">
<path d="M17 1.5 L30.5 9.2 L17 9.6 Z" fill="#383838"/><path d="M17 1.5 L3.5 9.5 L17 9.6Z" fill="#8d8d8d"/>
<path d="M3.5 9.5 L30.5 9.2 L17 33 Z" fill="#efefef"/><path d="M3.5 9.5 L17 33 L10 20Z" fill="#f7f7f7"/>
<path d="M3.5 9.5 V24.5 L10.5 21 Z" fill="#3c3c3c"/><path d="M3.5 24.5 L17 33 L10.5 21Z" fill="#9a9a9a"/>
<path d="M30.5 9.2 V24.5 L23.5 21 Z" fill="#4a4a4a"/><path d="M30.5 24.5 L17 33 L23.5 21Z" fill="#a8a8a8"/>
</g></svg><div style="position:absolute;left:3028.8px;top:1601.5px;width:213.4px;height:41.5px;background:#fff;border-radius:10px;box-shadow:inset 0 0 0 1.6px #dedede;"></div><svg style="position:absolute;left:3044.8px;top:1613.5px;" width="17.0" height="17.0" viewBox="0 0 17 17" fill="none"><circle cx="8.5" cy="8.5" r="8.5" fill="#8b3ff0"/></svg><div style="position:absolute;left:3256.7px;top:1601.5px;width:153.9px;height:41.5px;background:#fff;border-radius:10px;box-shadow:inset 0 0 0 1.6px #dedede;"></div><svg style="position:absolute;left:3274.7px;top:1609.5px;" width="25.0" height="26.0" viewBox="0 0 25 26" fill="none"><g stroke="#6b6b6b" stroke-width="2" stroke-linecap="round" stroke-linejoin="round"><path d="M12 23.5 H5 Q2 23.5 2 20.5 V7.5 Q2 4.5 5 4.5 H19 Q22 4.5 22 7.5 V14"/><path d="M2 10.5 H22 M7 2 V7 M17 2 V7"/><path d="M15.5 20.5 L18 23 L23 18"/></g></svg><div style="position:absolute;left:3425.2px;top:1601.5px;width:41.3px;height:41.5px;background:#fff;border-radius:10px;box-shadow:inset 0 0 0 1.6px #dedede;"></div><svg style="position:absolute;left:3425.2px;top:1609.5px;" width="41.3" height="30.0" viewBox="0 0 41.3 30" fill="none"><line x1="12.8" y1="17.3" x2="12.8" y2="22.6" stroke="#e07a2e" stroke-width="3.2" stroke-linecap="round"/><line x1="20.7" y1="10.2" x2="20.7" y2="22.6" stroke="#e07a2e" stroke-width="3.2" stroke-linecap="round"/><line x1="27.9" y1="2.4" x2="27.9" y2="22.6" stroke="#e07a2e" stroke-width="3.2" stroke-linecap="round"/></svg><div style="position:absolute;left:1010.0px;top:1698.0px;width:36.0px;height:36.0px;background:#e5ecfa;border-radius:8px;"></div><svg style="position:absolute;left:1010.0px;top:1698.0px;" width="36.0" height="36.0" viewBox="0 0 36 36" fill="none"><path d="M14.7 8.2 Q17.0 14.599999999999998 23.4 16.9 Q17.0 19.2 14.7 25.599999999999998 Q12.399999999999999 19.2 6.0 16.9 Q12.399999999999999 14.599999999999998 14.7 8.2Z" fill="#1e4fc4"/><path d="M25.2 4.9 Q26.5 8.6 30.2 9.9 Q26.5 11.200000000000001 25.2 14.9 Q23.9 11.200000000000001 20.2 9.9 Q23.9 8.6 25.2 4.9Z" fill="#1e4fc4"/><path d="M23.4 20.299999999999997 Q24.549999999999997 23.55 27.799999999999997 24.7 Q24.549999999999997 25.849999999999998 23.4 29.1 Q22.25 25.849999999999998 19.0 24.7 Q22.25 23.55 23.4 20.299999999999997Z" fill="#1e4fc4"/></svg><svg style="position:absolute;left:3097.8px;top:1694.9px;" width="42.2" height="42.2" viewBox="0 0 42.19999999999982 42.19999999999982" fill="none"><defs><clipPath id="ac16"><circle cx="21.09999999999991" cy="21.09999999999991" r="21.09999999999991"/></clipPath></defs><g clip-path="url(#ac16)"><rect width="42.19999999999982" height="42.19999999999982" fill="#d9c3b6"/><rect x="21.09999999999991" width="21.09999999999991" height="42.19999999999982" fill="#3b3f47"/><rect x="17.301999999999925" y="23.2099999999999" width="7.595999999999967" height="8.439999999999964" fill="#c9a58f"/><ellipse cx="21.09999999999991" cy="18.145999999999923" rx="6.96299999999997" ry="8.861999999999961" fill="#d8b39c"/><path d="M14.13699999999994 18.145999999999923 Q14.769999999999936 25.31999999999989 21.09999999999991 27.007999999999885 Q16.879999999999928 23.2099999999999 15.824999999999932 16.879999999999928Z" fill="#b58d78" opacity="0.45"/><path d="M13.92599999999994 17.301999999999925 Q13.081999999999944 7.595999999999967 21.09999999999991 7.173999999999969 Q29.11799999999987 7.595999999999967 28.27399999999988 17.301999999999925 Q27.429999999999882 11.815999999999951 21.09999999999991 12.237999999999946 Q15.191999999999934 11.815999999999951 13.92599999999994 17.301999999999925Z" fill="#3a2d27"/><path d="M1.6879999999999928 42.19999999999982 Q4.219999999999982 29.96199999999987 16.879999999999928 29.11799999999987 L21.09999999999991 32.70499999999986 L25.31999999999989 29.11799999999987 Q37.97999999999984 29.96199999999987 40.51199999999982 42.19999999999982Z" fill="#2d3347"/><path d="M16.879999999999928 29.11799999999987 L21.09999999999991 32.70499999999986 L25.31999999999989 29.11799999999987 L23.631999999999902 42.19999999999982 H18.56799999999992Z" fill="#a3abb5"/></g><circle cx="21.09999999999991" cy="21.09999999999991" r="22.29999999999991" stroke="#ffffff" stroke-width="2.4"/></svg><div style="position:absolute;left:3153.9px;top:1695.5px;width:106.6px;height:41.5px;background:#fff;border-radius:10px;box-shadow:inset 0 0 0 1.6px #dedede;"></div><svg style="position:absolute;left:3169.9px;top:1707.5px;" width="17.0" height="17.0" viewBox="0 0 17 17" fill="none"><circle cx="8.5" cy="8.5" r="8.5" fill="#8b3ff0"/></svg><div style="position:absolute;left:3275.0px;top:1695.5px;width:135.6px;height:41.5px;background:#fff;border-radius:10px;box-shadow:inset 0 0 0 1.6px #dedede;"></div><svg style="position:absolute;left:3293.0px;top:1703.5px;" width="25.0" height="26.0" viewBox="0 0 25 26" fill="none"><g stroke="#6b6b6b" stroke-width="2" stroke-linecap="round" stroke-linejoin="round"><path d="M12 23.5 H5 Q2 23.5 2 20.5 V7.5 Q2 4.5 5 4.5 H19 Q22 4.5 22 7.5 V14"/><path d="M2 10.5 H22 M7 2 V7 M17 2 V7"/><path d="M15.5 20.5 L18 23 L23 18"/></g></svg><div style="position:absolute;left:3425.2px;top:1695.5px;width:41.3px;height:41.5px;background:#fff;border-radius:10px;box-shadow:inset 0 0 0 1.6px #dedede;"></div><svg style="position:absolute;left:3425.2px;top:1703.5px;" width="41.3" height="30.0" viewBox="0 0 41.3 30" fill="none"><line x1="12.8" y1="17.3" x2="12.8" y2="22.6" stroke="#3c70e0" stroke-width="3.2" stroke-linecap="round"/><line x1="20.7" y1="10.2" x2="20.7" y2="22.6" stroke="#d6d6d6" stroke-width="3.2" stroke-linecap="round"/><line x1="27.9" y1="2.4" x2="27.9" y2="22.6" stroke="#d6d6d6" stroke-width="3.2" stroke-linecap="round"/></svg><div style="position:absolute;left:1010.0px;top:1868.0px;width:36.0px;height:36.0px;background:#d4efdb;border-radius:8px;"></div><svg style="position:absolute;left:1010.0px;top:1868.0px;" width="36.0" height="36.0" viewBox="0 0 36 36" fill="none"><g stroke="#2f9e57" stroke-width="1.7" stroke-linejoin="round"><path d="M18 7 L28 12.3 V23.9 L18 29.2 L8 23.9 V12.3 Z"/><path d="M8 12.3 L18 17.6 L28 12.3 M18 17.6 V29.2"/></g></svg><svg style="position:absolute;left:2969.3px;top:1864.7px;" width="42.7" height="42.7" viewBox="0 0 42.69999999999982 42.69999999999982" fill="none"><circle cx="21.34999999999991" cy="21.34999999999991" r="22.54999999999991" fill="#ee4444" stroke="#fff" stroke-width="2.4"/></svg><div style="position:absolute;left:3025.0px;top:1865.5px;width:223.3px;height:41.5px;background:#fff;border-radius:10px;box-shadow:inset 0 0 0 1.6px #dedede;"></div><svg style="position:absolute;left:3041.0px;top:1877.5px;" width="17.0" height="17.0" viewBox="0 0 17 17" fill="none"><circle cx="8.5" cy="8.5" r="8.5" fill="#8b3ff0"/></svg><div style="position:absolute;left:3263.0px;top:1865.5px;width:147.6px;height:41.5px;background:#fff;border-radius:10px;box-shadow:inset 0 0 0 1.6px #dedede;"></div><svg style="position:absolute;left:3281.0px;top:1873.5px;" width="25.0" height="26.0" viewBox="0 0 25 26" fill="none"><g stroke="#6b6b6b" stroke-width="2" stroke-linecap="round" stroke-linejoin="round"><path d="M12 23.5 H5 Q2 23.5 2 20.5 V7.5 Q2 4.5 5 4.5 H19 Q22 4.5 22 7.5 V14"/><path d="M2 10.5 H22 M7 2 V7 M17 2 V7"/><path d="M15.5 20.5 L18 23 L23 18"/></g></svg><div style="position:absolute;left:3425.2px;top:1865.5px;width:41.3px;height:41.5px;background:#fff;border-radius:10px;box-shadow:inset 0 0 0 1.6px #dedede;"></div><svg style="position:absolute;left:3425.2px;top:1873.5px;" width="41.3" height="30.0" viewBox="0 0 41.3 30" fill="none"><line x1="12.8" y1="17.3" x2="12.8" y2="22.6" stroke="#e07a2e" stroke-width="3.2" stroke-linecap="round"/><line x1="20.7" y1="10.2" x2="20.7" y2="22.6" stroke="#e07a2e" stroke-width="3.2" stroke-linecap="round"/><line x1="27.9" y1="2.4" x2="27.9" y2="22.6" stroke="#e07a2e" stroke-width="3.2" stroke-linecap="round"/></svg><div style="position:absolute;left:1010.0px;top:1962.0px;width:36.0px;height:36.0px;background:#e5ecfa;border-radius:8px;"></div><svg style="position:absolute;left:1010.0px;top:1962.0px;" width="36.0" height="36.0" viewBox="0 0 36 36" fill="none"><path d="M14.7 8.2 Q17.0 14.599999999999998 23.4 16.9 Q17.0 19.2 14.7 25.599999999999998 Q12.399999999999999 19.2 6.0 16.9 Q12.399999999999999 14.599999999999998 14.7 8.2Z" fill="#1e4fc4"/><path d="M25.2 4.9 Q26.5 8.6 30.2 9.9 Q26.5 11.200000000000001 25.2 14.9 Q23.9 11.200000000000001 20.2 9.9 Q23.9 8.6 25.2 4.9Z" fill="#1e4fc4"/><path d="M23.4 20.299999999999997 Q24.549999999999997 23.55 27.799999999999997 24.7 Q24.549999999999997 25.849999999999998 23.4 29.1 Q22.25 25.849999999999998 19.0 24.7 Q22.25 23.55 23.4 20.299999999999997Z" fill="#1e4fc4"/></svg><svg style="position:absolute;left:3064.0px;top:1958.8px;" width="42.5" height="42.5" viewBox="0 0 42.5 42.5" fill="none"><defs><clipPath id="ac18"><circle cx="21.25" cy="21.25" r="21.25"/></clipPath></defs><g clip-path="url(#ac18)"><rect width="42.5" height="42.5" fill="#bfb9b7"/><rect x="21.25" width="21.25" height="42.5" fill="#aca7a6"/><path d="M11.687500000000002 15.9375 Q11.687500000000002 6.375 21.25 6.375 Q30.8125 6.375 30.8125 15.9375 L34.0 36.125 L8.5 36.125 Z" fill="#c8955d"/><rect x="17.425" y="23.375000000000004" width="7.6499999999999995" height="8.5" fill="#e0b49a"/><ellipse cx="21.25" cy="18.275" rx="7.0125" ry="8.924999999999999" fill="#eabfa6"/><path d="M14.2375 18.275 Q14.874999999999998 25.5 21.25 27.2 Q17.0 23.375000000000004 15.9375 17.0Z" fill="#cf9f86" opacity="0.45"/><path d="M14.025 17.425 Q13.175 7.6499999999999995 21.25 7.2250000000000005 Q29.325 7.6499999999999995 28.475 17.425 Q27.625 11.9 21.25 12.325 Q15.299999999999999 11.9 14.025 17.425Z" fill="#c8955d"/><path d="M1.7 42.5 Q4.25 30.174999999999997 17.0 29.325 L21.25 32.9375 L25.5 29.325 Q38.25 30.174999999999997 40.8 42.5Z" fill="#1aa0b5"/></g><circle cx="21.25" cy="21.25" r="22.45" stroke="#ffffff" stroke-width="2.4"/></svg><div style="position:absolute;left:3120.2px;top:1959.5px;width:125.2px;height:41.5px;background:#fff;border-radius:10px;box-shadow:inset 0 0 0 1.6px #dedede;"></div><svg style="position:absolute;left:3136.2px;top:1971.5px;" width="17.0" height="17.0" viewBox="0 0 17 17" fill="none"><circle cx="8.5" cy="8.5" r="8.5" fill="#8b3ff0"/></svg><div style="position:absolute;left:3260.3px;top:1959.5px;width:150.3px;height:41.5px;background:#fff;border-radius:10px;box-shadow:inset 0 0 0 1.6px #dedede;"></div><svg style="position:absolute;left:3278.3px;top:1967.5px;" width="25.0" height="26.0" viewBox="0 0 25 26" fill="none"><g stroke="#6b6b6b" stroke-width="2" stroke-linecap="round" stroke-linejoin="round"><path d="M12 23.5 H5 Q2 23.5 2 20.5 V7.5 Q2 4.5 5 4.5 H19 Q22 4.5 22 7.5 V14"/><path d="M2 10.5 H22 M7 2 V7 M17 2 V7"/><path d="M15.5 20.5 L18 23 L23 18"/></g></svg><div style="position:absolute;left:3425.2px;top:1959.5px;width:41.3px;height:41.5px;background:#fff;border-radius:10px;box-shadow:inset 0 0 0 1.6px #dedede;"></div><svg style="position:absolute;left:3425.2px;top:1967.5px;" width="41.3" height="30.0" viewBox="0 0 41.3 30" fill="none"><line x1="12.8" y1="17.3" x2="12.8" y2="22.6" stroke="#e9b233" stroke-width="3.2" stroke-linecap="round"/><line x1="20.7" y1="10.2" x2="20.7" y2="22.6" stroke="#e9b233" stroke-width="3.2" stroke-linecap="round"/><line x1="27.9" y1="2.4" x2="27.9" y2="22.6" stroke="#d6d6d6" stroke-width="3.2" stroke-linecap="round"/></svg>
<div class="t" style="left:406.9px;top:124.1px;font-size:31.10px;letter-spacing:0.12px;color:#1d1d1f;-webkit-text-stroke:0.3px #1d1d1f;">Acme Inc.</div><div class="t" style="left:1462.6px;top:124.6px;font-size:30.52px;letter-spacing:-0.47px;color:#8c8c8c;">Search Acme Inc.</div><div class="t" style="left:2156.6px;top:124.6px;font-size:30.52px;letter-spacing:0.00px;color:#9a9a9a;">K</div><div class="t" style="left:3232.5px;top:123.3px;font-size:32.70px;letter-spacing:0.64px;color:#3d3d3d;-webkit-text-stroke:0.3px #3d3d3d;">AI Assistant</div><div class="t" style="left:322.9px;top:280.0px;font-size:23.98px;letter-spacing:0.58px;color:#4a4a4a;">Projects</div><div class="t" style="left:343.9px;top:406.0px;font-size:24.71px;letter-spacing:0.36px;color:#4a4a4a;">Wiki</div><div class="t" style="left:355.9px;top:533.0px;font-size:24.71px;letter-spacing:-0.61px;color:#4a4a4a;">AI</div><div class="t" style="left:340.0px;top:660.6px;font-size:23.26px;letter-spacing:1.08px;color:#4a4a4a;">Desk</div><div class="t" style="left:321.2px;top:821.2px;font-size:23.84px;letter-spacing:0.89px;color:#4a4a4a;">Settings</div><div class="t" style="left:470.3px;top:222.7px;font-size:36.77px;letter-spacing:0.39px;color:#1d1d1f;-webkit-text-stroke:0.3px #1d1d1f;">Projects</div><div class="t" style="left:517.6px;top:316.4px;font-size:30.52px;letter-spacing:1.25px;color:#3f3f3f;-webkit-text-stroke:0.2px #3f3f3f;">New work item</div><div class="t" style="left:517.6px;top:414.0px;font-size:31.40px;letter-spacing:0.35px;color:#3f3f3f;-webkit-text-stroke:0.2px #3f3f3f;">Home</div><div class="t" style="left:517.6px;top:482.7px;font-size:30.52px;letter-spacing:1.32px;color:#3f3f3f;-webkit-text-stroke:0.2px #3f3f3f;">Your work</div><div class="t" style="left:470.6px;top:575.6px;font-size:30.52px;letter-spacing:0.13px;color:#8a8a8a;-webkit-text-stroke:0.2px #8a8a8a;">Workspace</div><div class="t" style="left:516.6px;top:644.1px;font-size:30.52px;letter-spacing:0.13px;color:#3f3f3f;-webkit-text-stroke:0.2px #3f3f3f;">Projects</div><div class="t" style="left:516.6px;top:711.7px;font-size:30.52px;letter-spacing:0.39px;color:#3f3f3f;-webkit-text-stroke:0.2px #3f3f3f;">Initiatives</div><div class="t" style="left:516.6px;top:779.1px;font-size:30.52px;letter-spacing:0.38px;color:#3f3f3f;-webkit-text-stroke:0.2px #3f3f3f;">Analytics</div><div class="t" style="left:516.6px;top:847.1px;font-size:30.52px;letter-spacing:-0.18px;color:#3f3f3f;-webkit-text-stroke:0.2px #3f3f3f;">Dashboards</div><div class="t" style="left:516.6px;top:916.1px;font-size:30.52px;letter-spacing:0.35px;color:#3f3f3f;-webkit-text-stroke:0.2px #3f3f3f;">Drafts</div><div class="t" style="left:516.6px;top:984.1px;font-size:30.52px;letter-spacing:0.32px;color:#3f3f3f;-webkit-text-stroke:0.2px #3f3f3f;">Views</div><div class="t" style="left:516.6px;top:1053.1px;font-size:30.52px;letter-spacing:0.07px;color:#3f3f3f;-webkit-text-stroke:0.2px #3f3f3f;">More</div><div class="t" style="left:470.7px;top:1147.3px;font-size:29.65px;letter-spacing:0.71px;color:#8a8a8a;-webkit-text-stroke:0.2px #8a8a8a;">Projects</div><div class="t" style="left:517.2px;top:1214.4px;font-size:33.14px;letter-spacing:-0.02px;color:#1d1d1f;-webkit-text-stroke:0.3px #1d1d1f;">Core product</div><div class="t" style="left:521.7px;top:1284.2px;font-size:29.94px;letter-spacing:1.31px;color:#3f3f3f;-webkit-text-stroke:0.2px #3f3f3f;">Wed Development</div><div class="t" style="left:521.7px;top:1352.9px;font-size:29.65px;letter-spacing:0.81px;color:#3f3f3f;-webkit-text-stroke:0.2px #3f3f3f;">Plane Pro</div><div class="t" style="left:521.7px;top:1421.2px;font-size:29.94px;letter-spacing:1.49px;color:#3f3f3f;-webkit-text-stroke:0.2px #3f3f3f;">Discover</div><div class="t" style="left:517.4px;top:1489.8px;font-size:29.36px;letter-spacing:2.29px;color:#3f3f3f;-webkit-text-stroke:0.2px #3f3f3f;">More</div><div class="t" style="left:1082.4px;top:221.6px;font-size:35.61px;letter-spacing:1.12px;color:#1d1d1f;-webkit-text-stroke:0.35px #1d1d1f;">Core product</div><div class="t" style="left:1388.2px;top:227.6px;font-size:28.49px;letter-spacing:1.10px;color:#4a4a4a;-webkit-text-stroke:0.2px #4a4a4a;">Overview</div><div class="t" style="left:1563.4px;top:226.8px;font-size:29.36px;letter-spacing:0.01px;color:#4a4a4a;-webkit-text-stroke:0.2px #4a4a4a;">Epics</div><div class="t" style="left:1683.7px;top:226.3px;font-size:29.65px;letter-spacing:0.38px;color:#1d1d1f;-webkit-text-stroke:0.3px #1d1d1f;">Work items</div><div class="t" style="left:1883.4px;top:226.8px;font-size:29.36px;letter-spacing:0.39px;color:#4a4a4a;-webkit-text-stroke:0.2px #4a4a4a;">Cycles</div><div class="t" style="left:2022.7px;top:226.8px;font-size:29.36px;letter-spacing:0.51px;color:#4a4a4a;-webkit-text-stroke:0.2px #4a4a4a;">Modules</div><div class="t" style="left:1052.6px;top:326.3px;font-size:31.40px;letter-spacing:0.58px;color:#1d1d1f;-webkit-text-stroke:0.3px #1d1d1f;">Work items</div><div class="t" style="left:1234.1px;top:328.9px;font-size:27.33px;letter-spacing:0.00px;color:#1a6aa3;-webkit-text-stroke:0.15px #1a6aa3;letter-spacing:-0.3px;">112</div><div class="t" style="left:2890.9px;top:327.3px;font-size:29.07px;letter-spacing:0.53px;color:#4a4a4a;-webkit-text-stroke:0.2px #4a4a4a;">List</div><div class="t" style="left:3254.3px;top:326.6px;font-size:29.94px;letter-spacing:0.49px;color:#ffffff;-webkit-text-stroke:0.35px #ffffff;">Add work item</div><div class="t" style="left:1052.5px;top:411.2px;font-size:32.85px;letter-spacing:-0.25px;color:#1d1d1f;-webkit-text-stroke:0.3px #1d1d1f;">Backlog</div><div class="t" style="left:1052.9px;top:1239.8px;font-size:31.40px;letter-spacing:0.85px;color:#1d1d1f;-webkit-text-stroke:0.3px #1d1d1f;">To do</div><div class="t" style="left:1052.6px;top:1787.2px;font-size:30.09px;letter-spacing:0.93px;color:#1d1d1f;-webkit-text-stroke:0.3px #1d1d1f;">In Progress</div><div class="t" style="left:1072.2px;top:497.0px;font-size:27.91px;letter-spacing:-0.67px;color:#6b6b6b;-webkit-text-stroke:0.15px #6b6b6b;">ACME-23</div><div class="t" style="left:1246.7px;top:495.7px;font-size:29.94px;letter-spacing:0.44px;color:#1d1d1f;-webkit-text-stroke:0.3px #1d1d1f;">Design empty state illustrations</div><div class="t" style="left:3073.5px;top:499.5px;font-size:24.71px;letter-spacing:0.15px;color:#606060;-webkit-text-stroke:0.05px #606060;">Enhancement</div><div class="t" style="left:3311.6px;top:499.5px;font-size:24.71px;letter-spacing:0.47px;color:#606060;-webkit-text-stroke:0.05px #606060;">22 Dec</div><div class="t" style="left:1072.2px;top:591.0px;font-size:27.91px;letter-spacing:-0.50px;color:#6b6b6b;-webkit-text-stroke:0.15px #6b6b6b;">ACME-45</div><div class="t" style="left:1246.7px;top:589.7px;font-size:29.94px;letter-spacing:0.20px;color:#1d1d1f;-webkit-text-stroke:0.3px #1d1d1f;">Embed pages in nested wiki views</div><div class="t" style="left:3161.9px;top:593.5px;font-size:24.71px;letter-spacing:0.20px;color:#606060;-webkit-text-stroke:0.05px #606060;">Editor</div><div class="t" style="left:3311.6px;top:593.5px;font-size:24.71px;letter-spacing:0.75px;color:#606060;-webkit-text-stroke:0.05px #606060;">03 Mar</div><div class="t" style="left:1072.2px;top:685.0px;font-size:27.91px;letter-spacing:-0.67px;color:#6b6b6b;-webkit-text-stroke:0.15px #6b6b6b;">ACME-67</div><div class="t" style="left:1246.7px;top:683.7px;font-size:29.94px;letter-spacing:0.40px;color:#1d1d1f;-webkit-text-stroke:0.3px #1d1d1f;">Improve Stickies drag-and-drop behavior</div><div class="t" style="left:3076.5px;top:687.5px;font-size:24.71px;letter-spacing:0.12px;color:#606060;-webkit-text-stroke:0.05px #606060;">Enhancement</div><div class="t" style="left:3314.9px;top:687.5px;font-size:24.71px;letter-spacing:0.08px;color:#606060;-webkit-text-stroke:0.05px #606060;">18 Aug</div><div class="t" style="left:1072.2px;top:779.0px;font-size:27.91px;letter-spacing:-0.50px;color:#6b6b6b;-webkit-text-stroke:0.15px #6b6b6b;">ACME-89</div><div class="t" style="left:1246.7px;top:777.7px;font-size:29.94px;letter-spacing:0.22px;color:#1d1d1f;-webkit-text-stroke:0.3px #1d1d1f;">Redesign nested pages list for mobile</div><div class="t" style="left:3153.0px;top:781.5px;font-size:24.71px;letter-spacing:0.33px;color:#606060;-webkit-text-stroke:0.05px #606060;">Mobile</div><div class="t" style="left:3311.6px;top:781.5px;font-size:24.71px;letter-spacing:0.47px;color:#606060;-webkit-text-stroke:0.05px #606060;">29 Nov</div><div class="t" style="left:1072.2px;top:873.0px;font-size:27.91px;letter-spacing:-1.17px;color:#6b6b6b;-webkit-text-stroke:0.15px #6b6b6b;">ACME-12</div><div class="t" style="left:1246.7px;top:871.7px;font-size:29.94px;letter-spacing:0.41px;color:#1d1d1f;-webkit-text-stroke:0.3px #1d1d1f;">Add voice input to AI chat</div><div class="t" style="left:3149.7px;top:875.5px;font-size:24.71px;letter-spacing:0.20px;color:#606060;-webkit-text-stroke:0.05px #606060;">3 labels</div><div class="t" style="left:3320.7px;top:875.5px;font-size:24.71px;letter-spacing:-0.71px;color:#606060;-webkit-text-stroke:0.05px #606060;">11 Feb</div><div class="t" style="left:1131.2px;top:967.0px;font-size:27.91px;letter-spacing:-0.44px;color:#6b6b6b;-webkit-text-stroke:0.15px #6b6b6b;">ACME-98</div><div class="t" style="left:1305.7px;top:965.7px;font-size:29.94px;letter-spacing:0.34px;color:#1d1d1f;-webkit-text-stroke:0.3px #1d1d1f;">Redesign context selector layout</div><div class="t" style="left:3204.8px;top:969.5px;font-size:24.71px;letter-spacing:-0.71px;color:#606060;-webkit-text-stroke:0.05px #606060;">AI</div><div class="t" style="left:3311.6px;top:969.5px;font-size:24.71px;letter-spacing:0.75px;color:#606060;-webkit-text-stroke:0.05px #606060;">03 Mar</div><div class="t" style="left:1131.2px;top:1061.0px;font-size:27.91px;letter-spacing:-0.87px;color:#6b6b6b;-webkit-text-stroke:0.15px #6b6b6b;">ACME-76</div><div class="t" style="left:1305.7px;top:1059.7px;font-size:29.94px;letter-spacing:0.19px;color:#1d1d1f;-webkit-text-stroke:0.3px #1d1d1f;">Redesign create work item modal</div><div class="t" style="left:3204.8px;top:1063.5px;font-size:24.71px;letter-spacing:-0.71px;color:#606060;-webkit-text-stroke:0.05px #606060;">AI</div><div class="t" style="left:3311.6px;top:1063.5px;font-size:24.71px;letter-spacing:0.75px;color:#606060;-webkit-text-stroke:0.05px #606060;">03 Mar</div><div class="t" style="left:1072.2px;top:1155.0px;font-size:27.91px;letter-spacing:-0.50px;color:#6b6b6b;-webkit-text-stroke:0.15px #6b6b6b;">ACME-34</div><div class="t" style="left:1246.7px;top:1153.7px;font-size:29.94px;letter-spacing:0.39px;color:#1d1d1f;-webkit-text-stroke:0.3px #1d1d1f;">Add password protection for pages and wiki</div><div class="t" style="left:3023.9px;top:1153.6px;font-size:30.52px;letter-spacing:0.00px;color:#ffffff;-webkit-text-stroke:0.2px #ffffff;">B</div><div class="t" style="left:3149.7px;top:1157.5px;font-size:24.71px;letter-spacing:0.20px;color:#606060;-webkit-text-stroke:0.05px #606060;">3 labels</div><div class="t" style="left:3320.7px;top:1157.5px;font-size:24.71px;letter-spacing:-0.53px;color:#606060;-webkit-text-stroke:0.05px #606060;">01 Jan</div><div class="t" style="left:1072.2px;top:1326.0px;font-size:27.91px;letter-spacing:-0.34px;color:#6b6b6b;-webkit-text-stroke:0.15px #6b6b6b;">ACME-56</div><div class="t" style="left:1246.7px;top:1324.7px;font-size:29.94px;letter-spacing:0.49px;color:#1d1d1f;-webkit-text-stroke:0.3px #1d1d1f;">Product Tour</div><div class="t" style="left:3060.1px;top:1324.6px;font-size:30.52px;letter-spacing:0.00px;color:#ffffff;-webkit-text-stroke:0.2px #ffffff;">K</div><div class="t" style="left:3146.5px;top:1328.5px;font-size:24.71px;letter-spacing:0.23px;color:#606060;-webkit-text-stroke:0.05px #606060;">Product</div><div class="t" style="left:3317.7px;top:1328.5px;font-size:24.71px;letter-spacing:0.62px;color:#606060;-webkit-text-stroke:0.05px #606060;">27 Apr</div><div class="t" style="left:1072.2px;top:1420.0px;font-size:27.91px;letter-spacing:-0.75px;color:#6b6b6b;-webkit-text-stroke:0.15px #6b6b6b;">ACME-78</div><div class="t" style="left:1246.7px;top:1418.7px;font-size:29.94px;letter-spacing:0.13px;color:#1d1d1f;-webkit-text-stroke:0.3px #1d1d1f;">Workflow approvals UX</div><div class="t" style="left:3103.6px;top:1422.5px;font-size:24.71px;letter-spacing:0.05px;color:#606060;-webkit-text-stroke:0.05px #606060;">Engineering</div><div class="t" style="left:3320.6px;top:1422.5px;font-size:24.71px;letter-spacing:-0.23px;color:#606060;-webkit-text-stroke:0.05px #606060;">14 Oct</div><div class="t" style="left:1072.2px;top:1514.0px;font-size:27.91px;letter-spacing:-0.34px;color:#6b6b6b;-webkit-text-stroke:0.15px #6b6b6b;">ACME-90</div><div class="t" style="left:1246.7px;top:1512.7px;font-size:29.94px;letter-spacing:0.18px;color:#1d1d1f;-webkit-text-stroke:0.3px #1d1d1f;">Redesign create work item modal</div><div class="t" style="left:3174.2px;top:1516.5px;font-size:24.71px;letter-spacing:-0.17px;color:#606060;-webkit-text-stroke:0.05px #606060;">Bug</div><div class="t" style="left:3302.6px;top:1516.5px;font-size:24.71px;letter-spacing:0.74px;color:#606060;-webkit-text-stroke:0.05px #606060;">30 Sept</div><div class="t" style="left:1072.2px;top:1608.0px;font-size:27.91px;letter-spacing:-1.34px;color:#6b6b6b;-webkit-text-stroke:0.15px #6b6b6b;">ACME-21</div><div class="t" style="left:1246.7px;top:1606.7px;font-size:29.94px;letter-spacing:0.31px;color:#1d1d1f;-webkit-text-stroke:0.3px #1d1d1f;">Improve epic detail view</div><div class="t" style="left:3070.7px;top:1610.5px;font-size:24.71px;letter-spacing:0.07px;color:#606060;-webkit-text-stroke:0.05px #606060;">Enhancement</div><div class="t" style="left:3308.6px;top:1610.5px;font-size:24.71px;letter-spacing:0.52px;color:#606060;-webkit-text-stroke:0.05px #606060;">08 May</div><div class="t" style="left:1072.2px;top:1702.0px;font-size:27.91px;letter-spacing:-0.34px;color:#6b6b6b;-webkit-text-stroke:0.15px #6b6b6b;">ACME-43</div><div class="t" style="left:1246.7px;top:1700.7px;font-size:29.94px;letter-spacing:0.26px;color:#1d1d1f;-webkit-text-stroke:0.3px #1d1d1f;">Nested page node redesign for mobile</div><div class="t" style="left:3195.8px;top:1704.5px;font-size:24.71px;letter-spacing:-0.11px;color:#606060;-webkit-text-stroke:0.05px #606060;">Wiki</div><div class="t" style="left:3326.9px;top:1704.5px;font-size:24.71px;letter-spacing:-0.12px;color:#606060;-webkit-text-stroke:0.05px #606060;">21 Jul</div><div class="t" style="left:1072.2px;top:1872.0px;font-size:27.91px;letter-spacing:-0.50px;color:#6b6b6b;-webkit-text-stroke:0.15px #6b6b6b;">ACME-65</div><div class="t" style="left:1246.7px;top:1870.7px;font-size:29.94px;letter-spacing:0.20px;color:#1d1d1f;-webkit-text-stroke:0.3px #1d1d1f;">UX/UI for Figma integration</div><div class="t" style="left:2980.8px;top:1870.6px;font-size:30.52px;letter-spacing:0.00px;color:#ffffff;-webkit-text-stroke:0.2px #ffffff;">G</div><div class="t" style="left:3066.9px;top:1874.5px;font-size:24.71px;letter-spacing:0.50px;color:#606060;-webkit-text-stroke:0.05px #606060;">Authentication</div><div class="t" style="left:3314.9px;top:1874.5px;font-size:24.71px;letter-spacing:-0.19px;color:#606060;-webkit-text-stroke:0.05px #606060;">19 Dec</div><div class="t" style="left:1072.2px;top:1966.0px;font-size:27.91px;letter-spacing:-0.67px;color:#6b6b6b;-webkit-text-stroke:0.15px #6b6b6b;">ACME-87</div><div class="t" style="left:1246.7px;top:1964.7px;font-size:29.94px;letter-spacing:0.34px;color:#1d1d1f;-webkit-text-stroke:0.3px #1d1d1f;">Dynamic icons based on context type</div><div class="t" style="left:3162.1px;top:1968.5px;font-size:24.71px;letter-spacing:-0.17px;color:#606060;-webkit-text-stroke:0.05px #606060;">Billing</div><div class="t" style="left:3312.2px;top:1968.5px;font-size:24.71px;letter-spacing:0.62px;color:#606060;-webkit-text-stroke:0.05px #606060;">25 Aug</div>
<div style="position:absolute;left:961px;top:1992px;width:2530px;height:17px;background:#efefef;"></div>
</body></html>
